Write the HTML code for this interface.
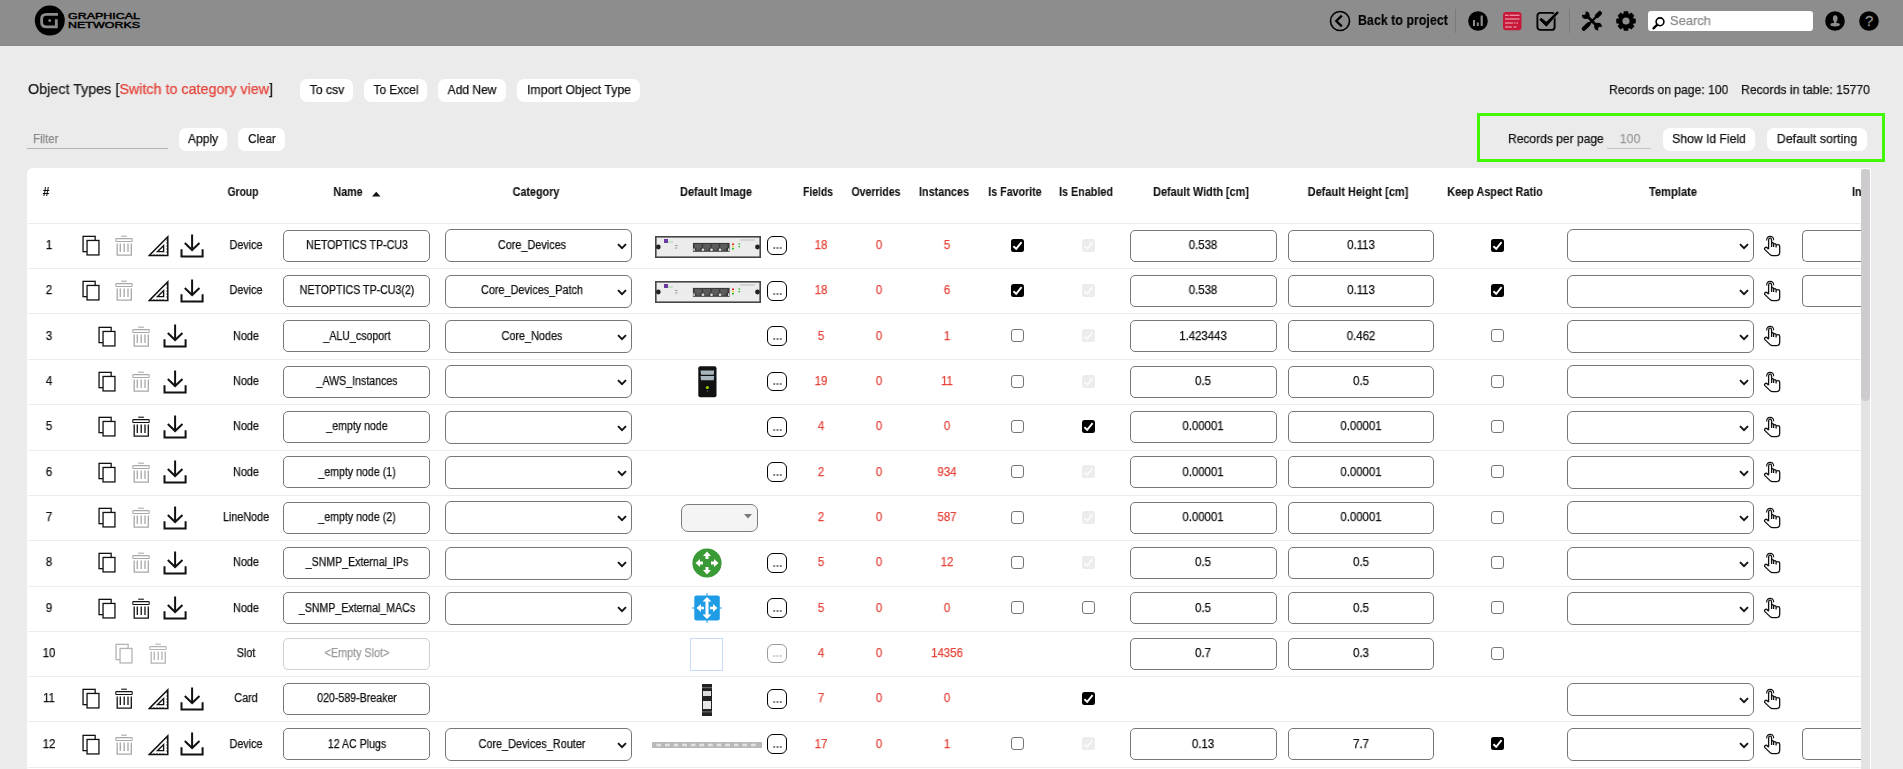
<!DOCTYPE html><html><head><meta charset="utf-8"><style>
html,body{margin:0;padding:0;width:1903px;height:769px;overflow:hidden;background:#ebebeb;font-family:'Liberation Sans',sans-serif;}
.a{position:absolute;box-sizing:border-box;}
.t{position:absolute;white-space:nowrap;font-family:'Liberation Sans',sans-serif;-webkit-text-stroke:0.25px currentColor;will-change:transform;}
</style></head><body>
<div class="a" style="left:0px;top:0px;width:1903px;height:46px;background:#8d8d8d;border-bottom:1px solid #888;"></div>
<svg class="a" style="left:34px;top:5px;" width="31" height="31" viewBox="0 0 31 31"><circle cx="15.8" cy="15.6" r="15" fill="#000"/>
<path d="M24 9.4 H12.5 Q7.6 9.4 7.6 14 V17.2 Q7.6 21.8 12.5 21.8 H22.3 V14.2" fill="none" stroke="#8d8d8d" stroke-width="2.8"/>
<circle cx="15.7" cy="15.6" r="1.4" fill="#8d8d8d"/></svg>
<svg class="a" style="left:68px;top:12px;" width="73" height="18" viewBox="0 0 73 18"><text x="0" y="7.3" font-family="Liberation Sans" font-size="8.8" textLength="72" lengthAdjust="spacingAndGlyphs" fill="#000" stroke="#000" stroke-width="0.45">GRAPHICAL</text>
<text x="0" y="16.3" font-family="Liberation Sans" font-size="8.8" textLength="72" lengthAdjust="spacingAndGlyphs" fill="#000" stroke="#000" stroke-width="0.45">NETWORKS</text></svg>
<svg class="a" style="left:1329px;top:10px;" width="22" height="22" viewBox="0 0 22 22"><circle cx="11" cy="11" r="9.5" fill="none" stroke="#000" stroke-width="1.6"/><path d="M12.8 5.6 L7.3 11 L12.8 16.4" fill="none" stroke="#000" stroke-width="2.3"/></svg>
<span class="t" style="left:1358px;top:13px;font-size:14px;line-height:14px;font-weight:700;color:#000;transform:scaleX(0.888);transform-origin:0 50%;-webkit-text-stroke:0.1px currentColor;">Back to project</span>
<div class="a" style="left:1455px;top:9px;width:1px;height:24px;background:#7a7a7a;"></div>
<svg class="a" style="left:1468px;top:11px;" width="20" height="20" viewBox="0 0 20 20"><circle cx="10" cy="10" r="9.8" fill="#000"/><rect x="5" y="9" width="2" height="6" fill="#8d8d8d"/><rect x="8.8" y="11.5" width="2" height="3.5" fill="#8d8d8d"/><rect x="12.6" y="4.5" width="2.2" height="10.5" fill="#8d8d8d"/></svg>
<svg class="a" style="left:1503px;top:12px;" width="19" height="19" viewBox="0 0 19 19"><rect x="0" y="0" width="18.5" height="18.3" rx="3" fill="#c8183a"/><g stroke="#f3b7c2" stroke-width="1.1"><path d="M2 3.2H5.5M6.5 3.2H16.5M2 7H16.5M2 11H10M11 11H12.5M13.5 11H15M2 15H9M10.5 15H13.5"/></g></svg>
<svg class="a" style="left:1536px;top:11px;" width="24" height="20" viewBox="0 0 24 20"><rect x="1.4" y="1.9" width="17.2" height="17" rx="3" fill="none" stroke="#000" stroke-width="1.9"/><path d="M3.5 8.8 L5.2 7 L10.3 11 L21.2 0.4 L22.6 1.8 L10.4 15.4 Z" fill="#000" stroke="#8d8d8d" stroke-width="1.4" paint-order="stroke"/><path d="M3.5 8.8 L5.2 7 L10.3 11 L21.2 0.4 L22.6 1.8 L10.4 15.4 Z" fill="#000"/></svg>
<div class="a" style="left:1569px;top:9px;width:1px;height:24px;background:#7a7a7a;"></div>
<svg class="a" style="left:1579px;top:8px;" width="27" height="26" viewBox="0 0 27 26"><path d="M5.5 20.5 L20 6" stroke="#000" stroke-width="2.2" stroke-linecap="round"/>
<path d="M4.8 20.8 L9.5 16.2" stroke="#000" stroke-width="4.2" stroke-linecap="round"/>
<path d="M18 8 L20.8 5.2" stroke="#000" stroke-width="4.4" stroke-linecap="round"/>
<path d="M7 7 L19 19" stroke="#000" stroke-width="2.8"/>
<circle cx="6.8" cy="7.2" r="3.8" fill="#000"/><circle cx="19" cy="18.6" r="3.8" fill="#000"/>
<circle cx="4.6" cy="4.8" r="2.2" fill="#8d8d8d"/><circle cx="21.2" cy="21" r="2.2" fill="#8d8d8d"/></svg>
<svg class="a" style="left:1616px;top:11px;" width="20" height="20" viewBox="0 0 20 20"><path d="M19.76 7.82 L19.76 12.18 L17.11 12.68 L16.92 13.14 L18.44 15.36 L15.36 18.44 L13.14 16.92 L12.68 17.11 L12.18 19.76 L7.82 19.76 L7.32 17.11 L6.86 16.92 L4.64 18.44 L1.56 15.36 L3.08 13.14 L2.89 12.68 L0.24 12.18 L0.24 7.82 L2.89 7.32 L3.08 6.86 L1.56 4.64 L4.64 1.56 L6.86 3.08 L7.32 2.89 L7.82 0.24 L12.18 0.24 L12.68 2.89 L13.14 3.08 L15.36 1.56 L18.44 4.64 L16.92 6.86 L17.11 7.32Z" fill="#000"/><circle cx="10" cy="10" r="3.6" fill="#8d8d8d"/></svg>
<div class="a" style="left:1648px;top:11px;width:165px;height:20px;background:#fff;border-radius:3px;"></div>
<svg class="a" style="left:1652px;top:16px;" width="14" height="14" viewBox="0 0 14 14"><circle cx="8" cy="5.8" r="3.9" fill="none" stroke="#000" stroke-width="1.6"/><path d="M5.3 8.6 L1.5 12.4" stroke="#000" stroke-width="2.2" stroke-linecap="round"/></svg>
<span class="t" style="left:1670px;top:14px;font-size:13px;line-height:13px;font-weight:400;color:#8a8a8a;transform:scaleX(0.9878048780487805);transform-origin:0 50%;">Search</span>
<svg class="a" style="left:1825px;top:11px;" width="20" height="20" viewBox="0 0 20 20"><circle cx="10" cy="10" r="9.8" fill="#000"/><ellipse cx="10.2" cy="7.5" rx="2.3" ry="3.2" fill="#8d8d8d"/><rect x="9" y="9.5" width="2.4" height="3" fill="#8d8d8d"/><ellipse cx="10.1" cy="13.6" rx="4.8" ry="1.9" fill="#8d8d8d"/></svg>
<svg class="a" style="left:1859px;top:11px;" width="20" height="20" viewBox="0 0 20 20"><circle cx="10" cy="10" r="9.8" fill="#000"/><text x="10.2" y="15.4" text-anchor="middle" font-family="Liberation Sans" font-size="15" fill="#8d8d8d" stroke="#8d8d8d" stroke-width="0.3">?</text></svg>
<span class="t" style="left:27.5px;top:82px;font-size:14.5px;line-height:14.5px;color:#1b1b1b;transform:scaleX(0.988);transform-origin:0 50%">Object Types [<span style="color:#e5443a">Switch to category view</span>]</span>
<div class="a" style="left:300px;top:79px;width:53px;height:22.5px;background:#fff;border-radius:7px;"></div>
<span class="t" style="left:326.5px;top:82.5px;font-size:13px;line-height:13px;font-weight:400;color:#111;transform:translateX(-50%) scaleX(0.9383378016085792);transform-origin:50% 50%;">To csv</span>
<div class="a" style="left:364px;top:79px;width:63px;height:22.5px;background:#fff;border-radius:7px;"></div>
<span class="t" style="left:395.5px;top:82.5px;font-size:13px;line-height:13px;font-weight:400;color:#111;transform:translateX(-50%) scaleX(0.9146341463414633);transform-origin:50% 50%;">To Excel</span>
<div class="a" style="left:438px;top:79px;width:68px;height:22.5px;background:#fff;border-radius:7px;"></div>
<span class="t" style="left:472.0px;top:82.5px;font-size:13px;line-height:13px;font-weight:400;color:#111;transform:translateX(-50%) scaleX(0.9250936329588015);transform-origin:50% 50%;">Add New</span>
<div class="a" style="left:517px;top:79px;width:123px;height:22.5px;background:#fff;border-radius:7px;"></div>
<span class="t" style="left:578.5px;top:82.5px;font-size:13px;line-height:13px;font-weight:400;color:#111;transform:translateX(-50%) scaleX(0.949367088607595);transform-origin:50% 50%;">Import Object Type</span>
<span class="t" style="left:1609px;top:83px;font-size:13px;line-height:13px;font-weight:400;color:#111;transform:scaleX(0.9324009324009325);transform-origin:0 50%;">Records on page: 100</span>
<span class="t" style="left:1741px;top:83px;font-size:13px;line-height:13px;font-weight:400;color:#111;transform:scaleX(0.9391745112237508);transform-origin:0 50%;">Records in table: 15770</span>
<span class="t" style="left:33px;top:132px;font-size:13px;line-height:13px;font-weight:400;color:#8a8a8a;transform:scaleX(0.8823529411764706);transform-origin:0 50%;">Filter</span>
<div class="a" style="left:27px;top:148px;width:141px;height:1px;background:#b4b4b4;"></div>
<div class="a" style="left:179px;top:128px;width:48px;height:22.5px;background:#fff;border-radius:7px;"></div>
<span class="t" style="left:203.0px;top:131.5px;font-size:13px;line-height:13px;font-weight:400;color:#111;transform:translateX(-50%) scaleX(0.9272727272727274);transform-origin:50% 50%;">Apply</span>
<div class="a" style="left:238px;top:128px;width:47px;height:22.5px;background:#fff;border-radius:7px;"></div>
<span class="t" style="left:261.5px;top:131.5px;font-size:13px;line-height:13px;font-weight:400;color:#111;transform:translateX(-50%) scaleX(0.889589905362776);transform-origin:50% 50%;">Clear</span>
<div class="a" style="left:1477px;top:112.5px;width:407.5px;height:49px;border:3px solid #41f702;"></div>
<span class="t" style="left:1507.5px;top:132px;font-size:13px;line-height:13px;font-weight:400;color:#111;transform:scaleX(0.926032660902978);transform-origin:0 50%;">Records per page</span>
<span class="t" style="left:1629.5px;top:132px;font-size:13px;line-height:13px;font-weight:400;color:#9a9a9a;transform:translateX(-50%) scaleX(0.95);transform-origin:50% 50%;">100</span>
<div class="a" style="left:1607px;top:148px;width:44px;height:1px;background:#c4c4c4;"></div>
<div class="a" style="left:1663px;top:128px;width:92px;height:22.5px;background:#fff;border-radius:7px;"></div>
<span class="t" style="left:1709.0px;top:131.5px;font-size:13px;line-height:13px;font-weight:400;color:#111;transform:translateX(-50%) scaleX(0.9350318471337581);transform-origin:50% 50%;">Show Id Field</span>
<div class="a" style="left:1767px;top:128px;width:100px;height:22.5px;background:#fff;border-radius:7px;"></div>
<span class="t" style="left:1817.0px;top:131.5px;font-size:13px;line-height:13px;font-weight:400;color:#111;transform:translateX(-50%) scaleX(0.9621749408983453);transform-origin:50% 50%;">Default sorting</span>
<div class="a" style="left:27px;top:168px;width:1844px;height:620px;background:#fff;border-radius:6px 0 0 0;"></div>
<span class="t" style="left:46px;top:186px;font-size:12px;line-height:12px;font-weight:700;color:#111;transform:translateX(-50%) scaleX(1.0);transform-origin:50% 50%;-webkit-text-stroke:0.1px currentColor;">#</span>
<span class="t" style="left:242.8px;top:186px;font-size:12px;line-height:12px;font-weight:700;color:#111;transform:translateX(-50%) scaleX(0.8553000560852496);transform-origin:50% 50%;-webkit-text-stroke:0.1px currentColor;">Group</span>
<span class="t" style="left:348.3px;top:186px;font-size:12px;line-height:12px;font-weight:700;color:#111;transform:translateX(-50%) scaleX(0.8939393939393939);transform-origin:50% 50%;-webkit-text-stroke:0.1px currentColor;">Name</span>
<span class="t" style="left:535.5px;top:186px;font-size:12px;line-height:12px;font-weight:700;color:#111;transform:translateX(-50%) scaleX(0.8986615678776291);transform-origin:50% 50%;-webkit-text-stroke:0.1px currentColor;">Category</span>
<span class="t" style="left:716.4px;top:186px;font-size:12px;line-height:12px;font-weight:700;color:#111;transform:translateX(-50%) scaleX(0.9151898734177215);transform-origin:50% 50%;-webkit-text-stroke:0.1px currentColor;">Default Image</span>
<span class="t" style="left:817.8px;top:186px;font-size:12px;line-height:12px;font-weight:700;color:#111;transform:translateX(-50%) scaleX(0.8628571428571429);transform-origin:50% 50%;-webkit-text-stroke:0.1px currentColor;">Fields</span>
<span class="t" style="left:875.7px;top:186px;font-size:12px;line-height:12px;font-weight:700;color:#111;transform:translateX(-50%) scaleX(0.874113475177305);transform-origin:50% 50%;-webkit-text-stroke:0.1px currentColor;">Overrides</span>
<span class="t" style="left:943.8px;top:186px;font-size:12px;line-height:12px;font-weight:700;color:#111;transform:translateX(-50%) scaleX(0.9048473967684021);transform-origin:50% 50%;-webkit-text-stroke:0.1px currentColor;">Instances</span>
<span class="t" style="left:1014.6px;top:186px;font-size:12px;line-height:12px;font-weight:700;color:#111;transform:translateX(-50%) scaleX(0.888888888888889);transform-origin:50% 50%;-webkit-text-stroke:0.1px currentColor;">Is Favorite</span>
<span class="t" style="left:1086.2px;top:186px;font-size:12px;line-height:12px;font-weight:700;color:#111;transform:translateX(-50%) scaleX(0.897822445561139);transform-origin:50% 50%;-webkit-text-stroke:0.1px currentColor;">Is Enabled</span>
<span class="t" style="left:1200.5px;top:186px;font-size:12px;line-height:12px;font-weight:700;color:#111;transform:translateX(-50%) scaleX(0.9036827195467422);transform-origin:50% 50%;-webkit-text-stroke:0.1px currentColor;">Default Width [cm]</span>
<span class="t" style="left:1358px;top:186px;font-size:12px;line-height:12px;font-weight:700;color:#111;transform:translateX(-50%) scaleX(0.9145454545454544);transform-origin:50% 50%;-webkit-text-stroke:0.1px currentColor;">Default Height [cm]</span>
<span class="t" style="left:1494.8px;top:186px;font-size:12px;line-height:12px;font-weight:700;color:#111;transform:translateX(-50%) scaleX(0.9044465468306527);transform-origin:50% 50%;-webkit-text-stroke:0.1px currentColor;">Keep Aspect Ratio</span>
<span class="t" style="left:1673px;top:186px;font-size:12px;line-height:12px;font-weight:700;color:#111;transform:translateX(-50%) scaleX(0.9309021113243762);transform-origin:50% 50%;-webkit-text-stroke:0.1px currentColor;">Template</span>
<span class="t" style="left:1851.5px;top:186px;font-size:12px;line-height:12px;font-weight:700;color:#111;transform:scaleX(0.9);transform-origin:0 50%;-webkit-text-stroke:0.1px currentColor;">In</span>
<svg class="a" style="left:372px;top:191px;" width="9" height="6" viewBox="0 0 9 6"><path d="M0 5.5 L4.25 0.8 L8.5 5.5 Z" fill="#111"/></svg>
<div class="a" style="left:28px;top:223px;width:1833px;height:1px;background:#ececec;"></div>
<div class="a" style="left:28px;top:268px;width:1833px;height:1px;background:#ececec;"></div>
<div class="a" style="left:28px;top:313px;width:1833px;height:1px;background:#ececec;"></div>
<div class="a" style="left:28px;top:359px;width:1833px;height:1px;background:#ececec;"></div>
<div class="a" style="left:28px;top:404px;width:1833px;height:1px;background:#ececec;"></div>
<div class="a" style="left:28px;top:450px;width:1833px;height:1px;background:#ececec;"></div>
<div class="a" style="left:28px;top:495px;width:1833px;height:1px;background:#ececec;"></div>
<div class="a" style="left:28px;top:540px;width:1833px;height:1px;background:#ececec;"></div>
<div class="a" style="left:28px;top:586px;width:1833px;height:1px;background:#ececec;"></div>
<div class="a" style="left:28px;top:631px;width:1833px;height:1px;background:#ececec;"></div>
<div class="a" style="left:28px;top:676px;width:1833px;height:1px;background:#ececec;"></div>
<div class="a" style="left:28px;top:721px;width:1833px;height:1px;background:#ececec;"></div>
<div class="a" style="left:28px;top:767px;width:1833px;height:1px;background:#ececec;"></div>
<span class="t" style="left:48.5px;top:239.0px;font-size:12px;line-height:12px;font-weight:400;color:#111;transform:translateX(-50%) scaleX(0.95);transform-origin:50% 50%;">1</span>
<svg class="a" style="left:82px;top:234.89999999999998px;" width="18" height="21" viewBox="0 0 18 21"><rect x="1.05" y="1.35" width="12.1" height="15.3" fill="none" stroke="#111" stroke-width="1.3"/><rect x="5.05" y="5.45" width="11.9" height="14.5" fill="#fff" stroke="#111" stroke-width="1.3"/></svg>
<svg class="a" style="left:115px;top:234.89999999999998px;" width="18" height="21" viewBox="0 0 18 21"><path d="M6.2 1.2 H11.9" stroke="#a8a8a8" stroke-width="1.1"/><rect x="0.8" y="3.6" width="16.4" height="2.9" rx="0.6" fill="none" stroke="#a8a8a8" stroke-width="1.05"/><path d="M2.2 8.5 V20.1 H16.3 V8.5 M5.3 8.5 V16.9 M9.2 8.5 V16.9 M13 8.5 V16.9" fill="none" stroke="#a8a8a8" stroke-width="1.3"/></svg>
<svg class="a" style="left:147.8px;top:234.89999999999998px;" width="21" height="22" viewBox="0 0 21 22"><path d="M1.2 20.6 L19.8 1.8 V20.6 Z" fill="none" stroke="#111" stroke-width="1.5" stroke-linejoin="miter"/><path d="M9.6 16.6 L15.6 10.6 V16.6 Z" fill="none" stroke="#111" stroke-width="1.4"/><path d="M18.2 5 H19.5 M18.2 8 H19.5 M18.2 11 H19.5 M18.2 14 H19.5 M18.2 17 H19.5 M6 19.2 V20.5 M9 19.2 V20.5 M12 19.2 V20.5 M15 19.2 V20.5" stroke="#111" stroke-width="0.9"/></svg>
<svg class="a" style="left:179.6px;top:233.59999999999997px;" width="25" height="24" viewBox="0 0 25 24"><path d="M12.1 0.5 V15.5 M4.8 9 L12.1 16 L19.5 9" fill="none" stroke="#111" stroke-width="2"/><path d="M1.5 15.3 V22.4 H22.6 V15.3" fill="none" stroke="#111" stroke-width="2"/></svg>
<span class="t" style="left:245.5px;top:239.0px;font-size:12px;line-height:12px;font-weight:400;color:#111;transform:translateX(-50%) scaleX(0.9);transform-origin:50% 50%;">Device</span>
<div class="a" style="left:283px;top:230px;width:147px;height:32px;background:#fff;border:1px solid #767676;border-radius:5px;"></div>
<span class="t" style="left:356.5px;top:239.0px;font-size:12px;line-height:12px;font-weight:400;color:#111;transform:translateX(-50%) scaleX(0.885);transform-origin:50% 50%;">NETOPTICS TP-CU3</span>
<div class="a" style="left:445px;top:229px;width:187px;height:33px;background:#fff;border:1px solid #767676;border-radius:6px;"></div>
<svg class="a" style="left:617px;top:243px;" width="10" height="7" viewBox="0 0 10 7"><path d="M1 1.2 L5 5.2 L9 1.2" fill="none" stroke="#111" stroke-width="1.9"/></svg>
<span class="t" style="left:532px;top:239.0px;font-size:12px;line-height:12px;font-weight:400;color:#111;transform:translateX(-50%) scaleX(0.905);transform-origin:50% 50%;">Core_Devices</span>
<svg class="a" style="left:655px;top:235.5px" width="106" height="22" viewBox="0 0 106 22">
<rect x="0.8" y="0.8" width="104.4" height="20.4" fill="#ececec" stroke="#454545" stroke-width="1.6"/>
<circle cx="3.3" cy="11" r="2.4" fill="#222"/><circle cx="102.5" cy="11" r="2.4" fill="#222"/>
<rect x="9" y="3" width="4" height="4" fill="#6a3aa0"/><rect x="13" y="5.5" width="5" height="1" fill="#9d9"/>
<rect x="37.9" y="6.9" width="36.7" height="8.9" fill="#3a3a3a"/><path d="M39.60 8 H46.80 V11.9 H45.10 V14.4 H41.30 V11.9 H39.60 Z" fill="#5c5c5c"/><rect x="38.3" y="12.4" width="1.6" height="2.6" fill="#d6d6d6"/><path d="M48.15 8 H55.35 V11.9 H53.65 V14.4 H49.85 V11.9 H48.15 Z" fill="#5c5c5c"/><rect x="46.55" y="12.4" width="2.8" height="2.6" rx="1" fill="#d6d6d6"/><path d="M56.70 8 H63.90 V11.9 H62.20 V14.4 H58.40 V11.9 H56.70 Z" fill="#5c5c5c"/><rect x="55.10" y="12.4" width="2.8" height="2.6" rx="1" fill="#d6d6d6"/><path d="M65.25 8 H72.45 V11.9 H70.75 V14.4 H66.95 V11.9 H65.25 Z" fill="#5c5c5c"/><rect x="63.65" y="12.4" width="2.8" height="2.6" rx="1" fill="#d6d6d6"/><rect x="73" y="12.4" width="1.4" height="2.6" fill="#d6d6d6"/>
<rect x="77" y="7.5" width="2" height="1.5" fill="#d22"/><rect x="77" y="9.8" width="2" height="1.5" fill="#dc3"/><rect x="77" y="12" width="2" height="1.5" fill="#3b3"/>
<rect x="83.5" y="7.3" width="1.6" height="1.3" fill="#3b3"/><rect x="83.5" y="10" width="1.6" height="1.3" fill="#3b3"/>
<rect x="20" y="9" width="2.5" height="1" fill="#999"/><rect x="20" y="11.5" width="2.5" height="1" fill="#999"/>
<rect x="85" y="3.5" width="15" height="1" fill="#bbb"/>
</svg>
<div class="a" style="left:767px;top:235.7px;width:20px;height:19.6px;background:#fff;border:1px solid #000;border-radius:6px;"></div>
<svg class="a" style="left:772.5px;top:247.2px;" width="9" height="2" viewBox="0 0 9 2"><path d="M0.3 1 H2.2 M3.5 1 H5.5 M6.8 1 H8.7" stroke="#000" stroke-width="1.2"/></svg>
<span class="t" style="left:820.8px;top:239.0px;font-size:12px;line-height:12px;font-weight:400;color:#e5443a;transform:translateX(-50%) scaleX(0.95);transform-origin:50% 50%;">18</span>
<span class="t" style="left:878.5px;top:239.0px;font-size:12px;line-height:12px;font-weight:400;color:#e5443a;transform:translateX(-50%) scaleX(0.95);transform-origin:50% 50%;">0</span>
<span class="t" style="left:946.8px;top:239.0px;font-size:12px;line-height:12px;font-weight:400;color:#e5443a;transform:translateX(-50%) scaleX(0.95);transform-origin:50% 50%;">5</span>
<svg class="a" style="left:1010.5px;top:238.7px;" width="13" height="13" viewBox="0 0 13 13"><rect x="0" y="0" width="13" height="13" rx="2.5" fill="#000"/><path d="M2.4 7.2 L5.2 9.8 L10.6 3.2" fill="none" stroke="#fff" stroke-width="1.9"/></svg>
<svg class="a" style="left:1082.0px;top:238.7px;" width="13" height="13" viewBox="0 0 13 13"><rect x="0" y="0" width="13" height="13" rx="2.5" fill="#ececec"/><path d="M2.4 7.2 L5.2 9.8 L10.6 3.2" fill="none" stroke="#fafafa" stroke-width="1.9"/></svg>
<div class="a" style="left:1130px;top:230px;width:147px;height:32px;background:#fff;border:1px solid #767676;border-radius:5px;"></div>
<span class="t" style="left:1203.3px;top:239.0px;font-size:12px;line-height:12px;font-weight:400;color:#111;transform:translateX(-50%) scaleX(0.95);transform-origin:50% 50%;">0.538</span>
<div class="a" style="left:1288px;top:230px;width:146px;height:32px;background:#fff;border:1px solid #767676;border-radius:5px;"></div>
<span class="t" style="left:1361px;top:239.0px;font-size:12px;line-height:12px;font-weight:400;color:#111;transform:translateX(-50%) scaleX(0.95);transform-origin:50% 50%;">0.113</span>
<svg class="a" style="left:1490.5px;top:238.7px;" width="13" height="13" viewBox="0 0 13 13"><rect x="0" y="0" width="13" height="13" rx="2.5" fill="#000"/><path d="M2.4 7.2 L5.2 9.8 L10.6 3.2" fill="none" stroke="#fff" stroke-width="1.9"/></svg>
<div class="a" style="left:1567px;top:229px;width:187px;height:33px;background:#fff;border:1px solid #767676;border-radius:6px;"></div>
<svg class="a" style="left:1739px;top:243px;" width="10" height="7" viewBox="0 0 10 7"><path d="M1 1.2 L5 5.2 L9 1.2" fill="none" stroke="#111" stroke-width="1.9"/></svg>
<svg class="a" style="left:1760px;top:231.7px;" width="22" height="26" viewBox="0 0 22 26"><path d="M6.6 8.6 Q6.7 4.5 10.2 4.4 Q13.6 4.5 13.7 8.2" fill="none" stroke="#111" stroke-width="1.1"/><path d="M8.6 17 V8 Q8.6 6.1 10.1 6.1 Q11.6 6.1 11.6 8 V15 M11.6 11.6 Q11.6 10.6 12.6 10.6 Q13.6 10.6 13.6 11.8 V15 M13.6 12.6 Q13.6 11.6 14.8 11.6 Q16.1 11.6 16.1 12.9 V15.5 M16.1 13.6 Q16.1 12.6 17.9 12.6 Q19.7 12.6 19.7 14.2 V20.5 Q19.7 23.6 16.5 23.6 H12.6 Q11.1 23.6 10.1 22.6 L4.9 17.6 Q4.1 16.6 5.1 15.6 Q6.1 14.9 7.1 15.6 L8.6 17.2" fill="#fff" stroke="#111" stroke-width="1.3" stroke-linejoin="round"/></svg>
<div class="a" style="left:1802px;top:230px;width:59px;height:32px;background:#fff;border:1px solid #767676;border-right:none;border-radius:5px 0 0 5px;"></div>
<span class="t" style="left:48.5px;top:284.3333px;font-size:12px;line-height:12px;font-weight:400;color:#111;transform:translateX(-50%) scaleX(0.95);transform-origin:50% 50%;">2</span>
<svg class="a" style="left:82px;top:280.2333px;" width="18" height="21" viewBox="0 0 18 21"><rect x="1.05" y="1.35" width="12.1" height="15.3" fill="none" stroke="#111" stroke-width="1.3"/><rect x="5.05" y="5.45" width="11.9" height="14.5" fill="#fff" stroke="#111" stroke-width="1.3"/></svg>
<svg class="a" style="left:115px;top:280.2333px;" width="18" height="21" viewBox="0 0 18 21"><path d="M6.2 1.2 H11.9" stroke="#a8a8a8" stroke-width="1.1"/><rect x="0.8" y="3.6" width="16.4" height="2.9" rx="0.6" fill="none" stroke="#a8a8a8" stroke-width="1.05"/><path d="M2.2 8.5 V20.1 H16.3 V8.5 M5.3 8.5 V16.9 M9.2 8.5 V16.9 M13 8.5 V16.9" fill="none" stroke="#a8a8a8" stroke-width="1.3"/></svg>
<svg class="a" style="left:147.8px;top:280.2333px;" width="21" height="22" viewBox="0 0 21 22"><path d="M1.2 20.6 L19.8 1.8 V20.6 Z" fill="none" stroke="#111" stroke-width="1.5" stroke-linejoin="miter"/><path d="M9.6 16.6 L15.6 10.6 V16.6 Z" fill="none" stroke="#111" stroke-width="1.4"/><path d="M18.2 5 H19.5 M18.2 8 H19.5 M18.2 11 H19.5 M18.2 14 H19.5 M18.2 17 H19.5 M6 19.2 V20.5 M9 19.2 V20.5 M12 19.2 V20.5 M15 19.2 V20.5" stroke="#111" stroke-width="0.9"/></svg>
<svg class="a" style="left:179.6px;top:278.9333px;" width="25" height="24" viewBox="0 0 25 24"><path d="M12.1 0.5 V15.5 M4.8 9 L12.1 16 L19.5 9" fill="none" stroke="#111" stroke-width="2"/><path d="M1.5 15.3 V22.4 H22.6 V15.3" fill="none" stroke="#111" stroke-width="2"/></svg>
<span class="t" style="left:245.5px;top:284.3333px;font-size:12px;line-height:12px;font-weight:400;color:#111;transform:translateX(-50%) scaleX(0.9);transform-origin:50% 50%;">Device</span>
<div class="a" style="left:283px;top:275px;width:147px;height:32px;background:#fff;border:1px solid #767676;border-radius:5px;"></div>
<span class="t" style="left:356.5px;top:284.3333px;font-size:12px;line-height:12px;font-weight:400;color:#111;transform:translateX(-50%) scaleX(0.885);transform-origin:50% 50%;">NETOPTICS TP-CU3(2)</span>
<div class="a" style="left:445px;top:275px;width:187px;height:33px;background:#fff;border:1px solid #767676;border-radius:6px;"></div>
<svg class="a" style="left:617px;top:289px;" width="10" height="7" viewBox="0 0 10 7"><path d="M1 1.2 L5 5.2 L9 1.2" fill="none" stroke="#111" stroke-width="1.9"/></svg>
<span class="t" style="left:532px;top:284.3333px;font-size:12px;line-height:12px;font-weight:400;color:#111;transform:translateX(-50%) scaleX(0.905);transform-origin:50% 50%;">Core_Devices_Patch</span>
<svg class="a" style="left:655px;top:280.8333px" width="106" height="22" viewBox="0 0 106 22">
<rect x="0.8" y="0.8" width="104.4" height="20.4" fill="#ececec" stroke="#454545" stroke-width="1.6"/>
<circle cx="3.3" cy="11" r="2.4" fill="#222"/><circle cx="102.5" cy="11" r="2.4" fill="#222"/>
<rect x="9" y="3" width="4" height="4" fill="#6a3aa0"/><rect x="13" y="5.5" width="5" height="1" fill="#9d9"/>
<rect x="37.9" y="6.9" width="36.7" height="8.9" fill="#3a3a3a"/><path d="M39.60 8 H46.80 V11.9 H45.10 V14.4 H41.30 V11.9 H39.60 Z" fill="#5c5c5c"/><rect x="38.3" y="12.4" width="1.6" height="2.6" fill="#d6d6d6"/><path d="M48.15 8 H55.35 V11.9 H53.65 V14.4 H49.85 V11.9 H48.15 Z" fill="#5c5c5c"/><rect x="46.55" y="12.4" width="2.8" height="2.6" rx="1" fill="#d6d6d6"/><path d="M56.70 8 H63.90 V11.9 H62.20 V14.4 H58.40 V11.9 H56.70 Z" fill="#5c5c5c"/><rect x="55.10" y="12.4" width="2.8" height="2.6" rx="1" fill="#d6d6d6"/><path d="M65.25 8 H72.45 V11.9 H70.75 V14.4 H66.95 V11.9 H65.25 Z" fill="#5c5c5c"/><rect x="63.65" y="12.4" width="2.8" height="2.6" rx="1" fill="#d6d6d6"/><rect x="73" y="12.4" width="1.4" height="2.6" fill="#d6d6d6"/>
<rect x="77" y="7.5" width="2" height="1.5" fill="#d22"/><rect x="77" y="9.8" width="2" height="1.5" fill="#dc3"/><rect x="77" y="12" width="2" height="1.5" fill="#3b3"/>
<rect x="83.5" y="7.3" width="1.6" height="1.3" fill="#3b3"/><rect x="83.5" y="10" width="1.6" height="1.3" fill="#3b3"/>
<rect x="20" y="9" width="2.5" height="1" fill="#999"/><rect x="20" y="11.5" width="2.5" height="1" fill="#999"/>
<rect x="85" y="3.5" width="15" height="1" fill="#bbb"/>
</svg>
<div class="a" style="left:767px;top:281.0333px;width:20px;height:19.6px;background:#fff;border:1px solid #000;border-radius:6px;"></div>
<svg class="a" style="left:772.5px;top:292.5333px;" width="9" height="2" viewBox="0 0 9 2"><path d="M0.3 1 H2.2 M3.5 1 H5.5 M6.8 1 H8.7" stroke="#000" stroke-width="1.2"/></svg>
<span class="t" style="left:820.8px;top:284.3333px;font-size:12px;line-height:12px;font-weight:400;color:#e5443a;transform:translateX(-50%) scaleX(0.95);transform-origin:50% 50%;">18</span>
<span class="t" style="left:878.5px;top:284.3333px;font-size:12px;line-height:12px;font-weight:400;color:#e5443a;transform:translateX(-50%) scaleX(0.95);transform-origin:50% 50%;">0</span>
<span class="t" style="left:946.8px;top:284.3333px;font-size:12px;line-height:12px;font-weight:400;color:#e5443a;transform:translateX(-50%) scaleX(0.95);transform-origin:50% 50%;">6</span>
<svg class="a" style="left:1010.5px;top:284.0333px;" width="13" height="13" viewBox="0 0 13 13"><rect x="0" y="0" width="13" height="13" rx="2.5" fill="#000"/><path d="M2.4 7.2 L5.2 9.8 L10.6 3.2" fill="none" stroke="#fff" stroke-width="1.9"/></svg>
<svg class="a" style="left:1082.0px;top:284.0333px;" width="13" height="13" viewBox="0 0 13 13"><rect x="0" y="0" width="13" height="13" rx="2.5" fill="#ececec"/><path d="M2.4 7.2 L5.2 9.8 L10.6 3.2" fill="none" stroke="#fafafa" stroke-width="1.9"/></svg>
<div class="a" style="left:1130px;top:275px;width:147px;height:32px;background:#fff;border:1px solid #767676;border-radius:5px;"></div>
<span class="t" style="left:1203.3px;top:284.3333px;font-size:12px;line-height:12px;font-weight:400;color:#111;transform:translateX(-50%) scaleX(0.95);transform-origin:50% 50%;">0.538</span>
<div class="a" style="left:1288px;top:275px;width:146px;height:32px;background:#fff;border:1px solid #767676;border-radius:5px;"></div>
<span class="t" style="left:1361px;top:284.3333px;font-size:12px;line-height:12px;font-weight:400;color:#111;transform:translateX(-50%) scaleX(0.95);transform-origin:50% 50%;">0.113</span>
<svg class="a" style="left:1490.5px;top:284.0333px;" width="13" height="13" viewBox="0 0 13 13"><rect x="0" y="0" width="13" height="13" rx="2.5" fill="#000"/><path d="M2.4 7.2 L5.2 9.8 L10.6 3.2" fill="none" stroke="#fff" stroke-width="1.9"/></svg>
<div class="a" style="left:1567px;top:275px;width:187px;height:33px;background:#fff;border:1px solid #767676;border-radius:6px;"></div>
<svg class="a" style="left:1739px;top:289px;" width="10" height="7" viewBox="0 0 10 7"><path d="M1 1.2 L5 5.2 L9 1.2" fill="none" stroke="#111" stroke-width="1.9"/></svg>
<svg class="a" style="left:1760px;top:277.0333px;" width="22" height="26" viewBox="0 0 22 26"><path d="M6.6 8.6 Q6.7 4.5 10.2 4.4 Q13.6 4.5 13.7 8.2" fill="none" stroke="#111" stroke-width="1.1"/><path d="M8.6 17 V8 Q8.6 6.1 10.1 6.1 Q11.6 6.1 11.6 8 V15 M11.6 11.6 Q11.6 10.6 12.6 10.6 Q13.6 10.6 13.6 11.8 V15 M13.6 12.6 Q13.6 11.6 14.8 11.6 Q16.1 11.6 16.1 12.9 V15.5 M16.1 13.6 Q16.1 12.6 17.9 12.6 Q19.7 12.6 19.7 14.2 V20.5 Q19.7 23.6 16.5 23.6 H12.6 Q11.1 23.6 10.1 22.6 L4.9 17.6 Q4.1 16.6 5.1 15.6 Q6.1 14.9 7.1 15.6 L8.6 17.2" fill="#fff" stroke="#111" stroke-width="1.3" stroke-linejoin="round"/></svg>
<div class="a" style="left:1802px;top:275px;width:59px;height:32px;background:#fff;border:1px solid #767676;border-right:none;border-radius:5px 0 0 5px;"></div>
<span class="t" style="left:48.5px;top:329.6666px;font-size:12px;line-height:12px;font-weight:400;color:#111;transform:translateX(-50%) scaleX(0.95);transform-origin:50% 50%;">3</span>
<svg class="a" style="left:98px;top:325.5666px;" width="18" height="21" viewBox="0 0 18 21"><rect x="1.05" y="1.35" width="12.1" height="15.3" fill="none" stroke="#111" stroke-width="1.3"/><rect x="5.05" y="5.45" width="11.9" height="14.5" fill="#fff" stroke="#111" stroke-width="1.3"/></svg>
<svg class="a" style="left:132px;top:325.5666px;" width="18" height="21" viewBox="0 0 18 21"><path d="M6.2 1.2 H11.9" stroke="#a8a8a8" stroke-width="1.1"/><rect x="0.8" y="3.6" width="16.4" height="2.9" rx="0.6" fill="none" stroke="#a8a8a8" stroke-width="1.05"/><path d="M2.2 8.5 V20.1 H16.3 V8.5 M5.3 8.5 V16.9 M9.2 8.5 V16.9 M13 8.5 V16.9" fill="none" stroke="#a8a8a8" stroke-width="1.3"/></svg>
<svg class="a" style="left:162.5px;top:324.2666px;" width="25" height="24" viewBox="0 0 25 24"><path d="M12.1 0.5 V15.5 M4.8 9 L12.1 16 L19.5 9" fill="none" stroke="#111" stroke-width="2"/><path d="M1.5 15.3 V22.4 H22.6 V15.3" fill="none" stroke="#111" stroke-width="2"/></svg>
<span class="t" style="left:245.5px;top:329.6666px;font-size:12px;line-height:12px;font-weight:400;color:#111;transform:translateX(-50%) scaleX(0.9);transform-origin:50% 50%;">Node</span>
<div class="a" style="left:283px;top:320px;width:147px;height:32px;background:#fff;border:1px solid #767676;border-radius:5px;"></div>
<span class="t" style="left:356.5px;top:329.6666px;font-size:12px;line-height:12px;font-weight:400;color:#111;transform:translateX(-50%) scaleX(0.885);transform-origin:50% 50%;">_ALU_csoport</span>
<div class="a" style="left:445px;top:320px;width:187px;height:33px;background:#fff;border:1px solid #767676;border-radius:6px;"></div>
<svg class="a" style="left:617px;top:334px;" width="10" height="7" viewBox="0 0 10 7"><path d="M1 1.2 L5 5.2 L9 1.2" fill="none" stroke="#111" stroke-width="1.9"/></svg>
<span class="t" style="left:532px;top:329.6666px;font-size:12px;line-height:12px;font-weight:400;color:#111;transform:translateX(-50%) scaleX(0.905);transform-origin:50% 50%;">Core_Nodes</span>
<div class="a" style="left:767px;top:326.3666px;width:20px;height:19.6px;background:#fff;border:1px solid #000;border-radius:6px;"></div>
<svg class="a" style="left:772.5px;top:337.8666px;" width="9" height="2" viewBox="0 0 9 2"><path d="M0.3 1 H2.2 M3.5 1 H5.5 M6.8 1 H8.7" stroke="#000" stroke-width="1.2"/></svg>
<span class="t" style="left:820.8px;top:329.6666px;font-size:12px;line-height:12px;font-weight:400;color:#e5443a;transform:translateX(-50%) scaleX(0.95);transform-origin:50% 50%;">5</span>
<span class="t" style="left:878.5px;top:329.6666px;font-size:12px;line-height:12px;font-weight:400;color:#e5443a;transform:translateX(-50%) scaleX(0.95);transform-origin:50% 50%;">0</span>
<span class="t" style="left:946.8px;top:329.6666px;font-size:12px;line-height:12px;font-weight:400;color:#e5443a;transform:translateX(-50%) scaleX(0.95);transform-origin:50% 50%;">1</span>
<svg class="a" style="left:1010.5px;top:329.3666px;" width="13" height="13" viewBox="0 0 13 13"><rect x="0.5" y="0.5" width="12" height="12" rx="2.5" fill="#fff" stroke="#767676" stroke-width="1"/></svg>
<svg class="a" style="left:1082.0px;top:329.3666px;" width="13" height="13" viewBox="0 0 13 13"><rect x="0" y="0" width="13" height="13" rx="2.5" fill="#ececec"/><path d="M2.4 7.2 L5.2 9.8 L10.6 3.2" fill="none" stroke="#fafafa" stroke-width="1.9"/></svg>
<div class="a" style="left:1130px;top:320px;width:147px;height:32px;background:#fff;border:1px solid #767676;border-radius:5px;"></div>
<span class="t" style="left:1203.3px;top:329.6666px;font-size:12px;line-height:12px;font-weight:400;color:#111;transform:translateX(-50%) scaleX(0.95);transform-origin:50% 50%;">1.423443</span>
<div class="a" style="left:1288px;top:320px;width:146px;height:32px;background:#fff;border:1px solid #767676;border-radius:5px;"></div>
<span class="t" style="left:1361px;top:329.6666px;font-size:12px;line-height:12px;font-weight:400;color:#111;transform:translateX(-50%) scaleX(0.95);transform-origin:50% 50%;">0.462</span>
<svg class="a" style="left:1490.5px;top:329.3666px;" width="13" height="13" viewBox="0 0 13 13"><rect x="0.5" y="0.5" width="12" height="12" rx="2.5" fill="#fff" stroke="#767676" stroke-width="1"/></svg>
<div class="a" style="left:1567px;top:320px;width:187px;height:33px;background:#fff;border:1px solid #767676;border-radius:6px;"></div>
<svg class="a" style="left:1739px;top:334px;" width="10" height="7" viewBox="0 0 10 7"><path d="M1 1.2 L5 5.2 L9 1.2" fill="none" stroke="#111" stroke-width="1.9"/></svg>
<svg class="a" style="left:1760px;top:322.3666px;" width="22" height="26" viewBox="0 0 22 26"><path d="M6.6 8.6 Q6.7 4.5 10.2 4.4 Q13.6 4.5 13.7 8.2" fill="none" stroke="#111" stroke-width="1.1"/><path d="M8.6 17 V8 Q8.6 6.1 10.1 6.1 Q11.6 6.1 11.6 8 V15 M11.6 11.6 Q11.6 10.6 12.6 10.6 Q13.6 10.6 13.6 11.8 V15 M13.6 12.6 Q13.6 11.6 14.8 11.6 Q16.1 11.6 16.1 12.9 V15.5 M16.1 13.6 Q16.1 12.6 17.9 12.6 Q19.7 12.6 19.7 14.2 V20.5 Q19.7 23.6 16.5 23.6 H12.6 Q11.1 23.6 10.1 22.6 L4.9 17.6 Q4.1 16.6 5.1 15.6 Q6.1 14.9 7.1 15.6 L8.6 17.2" fill="#fff" stroke="#111" stroke-width="1.3" stroke-linejoin="round"/></svg>
<span class="t" style="left:48.5px;top:374.9999px;font-size:12px;line-height:12px;font-weight:400;color:#111;transform:translateX(-50%) scaleX(0.95);transform-origin:50% 50%;">4</span>
<svg class="a" style="left:98px;top:370.8999px;" width="18" height="21" viewBox="0 0 18 21"><rect x="1.05" y="1.35" width="12.1" height="15.3" fill="none" stroke="#111" stroke-width="1.3"/><rect x="5.05" y="5.45" width="11.9" height="14.5" fill="#fff" stroke="#111" stroke-width="1.3"/></svg>
<svg class="a" style="left:132px;top:370.8999px;" width="18" height="21" viewBox="0 0 18 21"><path d="M6.2 1.2 H11.9" stroke="#a8a8a8" stroke-width="1.1"/><rect x="0.8" y="3.6" width="16.4" height="2.9" rx="0.6" fill="none" stroke="#a8a8a8" stroke-width="1.05"/><path d="M2.2 8.5 V20.1 H16.3 V8.5 M5.3 8.5 V16.9 M9.2 8.5 V16.9 M13 8.5 V16.9" fill="none" stroke="#a8a8a8" stroke-width="1.3"/></svg>
<svg class="a" style="left:162.5px;top:369.5999px;" width="25" height="24" viewBox="0 0 25 24"><path d="M12.1 0.5 V15.5 M4.8 9 L12.1 16 L19.5 9" fill="none" stroke="#111" stroke-width="2"/><path d="M1.5 15.3 V22.4 H22.6 V15.3" fill="none" stroke="#111" stroke-width="2"/></svg>
<span class="t" style="left:245.5px;top:374.9999px;font-size:12px;line-height:12px;font-weight:400;color:#111;transform:translateX(-50%) scaleX(0.9);transform-origin:50% 50%;">Node</span>
<div class="a" style="left:283px;top:366px;width:147px;height:32px;background:#fff;border:1px solid #767676;border-radius:5px;"></div>
<span class="t" style="left:356.5px;top:374.9999px;font-size:12px;line-height:12px;font-weight:400;color:#111;transform:translateX(-50%) scaleX(0.885);transform-origin:50% 50%;">_AWS_Instances</span>
<div class="a" style="left:445px;top:365px;width:187px;height:33px;background:#fff;border:1px solid #767676;border-radius:6px;"></div>
<svg class="a" style="left:617px;top:379px;" width="10" height="7" viewBox="0 0 10 7"><path d="M1 1.2 L5 5.2 L9 1.2" fill="none" stroke="#111" stroke-width="1.9"/></svg>
<svg class="a" style="left:698px;top:366.1999px" width="19" height="32" viewBox="0 0 19 32">
<rect x="0.3" y="0.3" width="18.2" height="31" rx="2" fill="#111"/>
<path d="M2.5 4.5 H16.2 L15.7 8.8 H3 Z" fill="#a9b6bd"/><path d="M2.5 10 H16.2 L15.7 14.3 H3 Z" fill="#a9b6bd"/>
<circle cx="9.4" cy="21.5" r="1.6" fill="#8fd400"/><rect x="8.8" y="24.2" width="1.3" height="1.5" fill="#556"/>
</svg>
<div class="a" style="left:767px;top:371.6999px;width:20px;height:19.6px;background:#fff;border:1px solid #000;border-radius:6px;"></div>
<svg class="a" style="left:772.5px;top:383.1999px;" width="9" height="2" viewBox="0 0 9 2"><path d="M0.3 1 H2.2 M3.5 1 H5.5 M6.8 1 H8.7" stroke="#000" stroke-width="1.2"/></svg>
<span class="t" style="left:820.8px;top:374.9999px;font-size:12px;line-height:12px;font-weight:400;color:#e5443a;transform:translateX(-50%) scaleX(0.95);transform-origin:50% 50%;">19</span>
<span class="t" style="left:878.5px;top:374.9999px;font-size:12px;line-height:12px;font-weight:400;color:#e5443a;transform:translateX(-50%) scaleX(0.95);transform-origin:50% 50%;">0</span>
<span class="t" style="left:946.8px;top:374.9999px;font-size:12px;line-height:12px;font-weight:400;color:#e5443a;transform:translateX(-50%) scaleX(0.95);transform-origin:50% 50%;">11</span>
<svg class="a" style="left:1010.5px;top:374.6999px;" width="13" height="13" viewBox="0 0 13 13"><rect x="0.5" y="0.5" width="12" height="12" rx="2.5" fill="#fff" stroke="#767676" stroke-width="1"/></svg>
<svg class="a" style="left:1082.0px;top:374.6999px;" width="13" height="13" viewBox="0 0 13 13"><rect x="0" y="0" width="13" height="13" rx="2.5" fill="#ececec"/><path d="M2.4 7.2 L5.2 9.8 L10.6 3.2" fill="none" stroke="#fafafa" stroke-width="1.9"/></svg>
<div class="a" style="left:1130px;top:366px;width:147px;height:32px;background:#fff;border:1px solid #767676;border-radius:5px;"></div>
<span class="t" style="left:1203.3px;top:374.9999px;font-size:12px;line-height:12px;font-weight:400;color:#111;transform:translateX(-50%) scaleX(0.95);transform-origin:50% 50%;">0.5</span>
<div class="a" style="left:1288px;top:366px;width:146px;height:32px;background:#fff;border:1px solid #767676;border-radius:5px;"></div>
<span class="t" style="left:1361px;top:374.9999px;font-size:12px;line-height:12px;font-weight:400;color:#111;transform:translateX(-50%) scaleX(0.95);transform-origin:50% 50%;">0.5</span>
<svg class="a" style="left:1490.5px;top:374.6999px;" width="13" height="13" viewBox="0 0 13 13"><rect x="0.5" y="0.5" width="12" height="12" rx="2.5" fill="#fff" stroke="#767676" stroke-width="1"/></svg>
<div class="a" style="left:1567px;top:365px;width:187px;height:33px;background:#fff;border:1px solid #767676;border-radius:6px;"></div>
<svg class="a" style="left:1739px;top:379px;" width="10" height="7" viewBox="0 0 10 7"><path d="M1 1.2 L5 5.2 L9 1.2" fill="none" stroke="#111" stroke-width="1.9"/></svg>
<svg class="a" style="left:1760px;top:367.6999px;" width="22" height="26" viewBox="0 0 22 26"><path d="M6.6 8.6 Q6.7 4.5 10.2 4.4 Q13.6 4.5 13.7 8.2" fill="none" stroke="#111" stroke-width="1.1"/><path d="M8.6 17 V8 Q8.6 6.1 10.1 6.1 Q11.6 6.1 11.6 8 V15 M11.6 11.6 Q11.6 10.6 12.6 10.6 Q13.6 10.6 13.6 11.8 V15 M13.6 12.6 Q13.6 11.6 14.8 11.6 Q16.1 11.6 16.1 12.9 V15.5 M16.1 13.6 Q16.1 12.6 17.9 12.6 Q19.7 12.6 19.7 14.2 V20.5 Q19.7 23.6 16.5 23.6 H12.6 Q11.1 23.6 10.1 22.6 L4.9 17.6 Q4.1 16.6 5.1 15.6 Q6.1 14.9 7.1 15.6 L8.6 17.2" fill="#fff" stroke="#111" stroke-width="1.3" stroke-linejoin="round"/></svg>
<span class="t" style="left:48.5px;top:420.33320000000003px;font-size:12px;line-height:12px;font-weight:400;color:#111;transform:translateX(-50%) scaleX(0.95);transform-origin:50% 50%;">5</span>
<svg class="a" style="left:98px;top:416.2332px;" width="18" height="21" viewBox="0 0 18 21"><rect x="1.05" y="1.35" width="12.1" height="15.3" fill="none" stroke="#111" stroke-width="1.3"/><rect x="5.05" y="5.45" width="11.9" height="14.5" fill="#fff" stroke="#111" stroke-width="1.3"/></svg>
<svg class="a" style="left:132px;top:416.2332px;" width="18" height="21" viewBox="0 0 18 21"><path d="M6.2 1.2 H11.9" stroke="#111" stroke-width="1.1"/><rect x="0.8" y="3.6" width="16.4" height="2.9" rx="0.6" fill="none" stroke="#111" stroke-width="1.05"/><path d="M2.2 8.5 V20.1 H16.3 V8.5 M5.3 8.5 V16.9 M9.2 8.5 V16.9 M13 8.5 V16.9" fill="none" stroke="#111" stroke-width="1.3"/></svg>
<svg class="a" style="left:162.5px;top:414.9332px;" width="25" height="24" viewBox="0 0 25 24"><path d="M12.1 0.5 V15.5 M4.8 9 L12.1 16 L19.5 9" fill="none" stroke="#111" stroke-width="2"/><path d="M1.5 15.3 V22.4 H22.6 V15.3" fill="none" stroke="#111" stroke-width="2"/></svg>
<span class="t" style="left:245.5px;top:420.33320000000003px;font-size:12px;line-height:12px;font-weight:400;color:#111;transform:translateX(-50%) scaleX(0.9);transform-origin:50% 50%;">Node</span>
<div class="a" style="left:283px;top:411px;width:147px;height:32px;background:#fff;border:1px solid #767676;border-radius:5px;"></div>
<span class="t" style="left:356.5px;top:420.33320000000003px;font-size:12px;line-height:12px;font-weight:400;color:#111;transform:translateX(-50%) scaleX(0.885);transform-origin:50% 50%;">_empty node</span>
<div class="a" style="left:445px;top:411px;width:187px;height:33px;background:#fff;border:1px solid #767676;border-radius:6px;"></div>
<svg class="a" style="left:617px;top:425px;" width="10" height="7" viewBox="0 0 10 7"><path d="M1 1.2 L5 5.2 L9 1.2" fill="none" stroke="#111" stroke-width="1.9"/></svg>
<div class="a" style="left:767px;top:417.0332px;width:20px;height:19.6px;background:#fff;border:1px solid #000;border-radius:6px;"></div>
<svg class="a" style="left:772.5px;top:428.5332px;" width="9" height="2" viewBox="0 0 9 2"><path d="M0.3 1 H2.2 M3.5 1 H5.5 M6.8 1 H8.7" stroke="#000" stroke-width="1.2"/></svg>
<span class="t" style="left:820.8px;top:420.33320000000003px;font-size:12px;line-height:12px;font-weight:400;color:#e5443a;transform:translateX(-50%) scaleX(0.95);transform-origin:50% 50%;">4</span>
<span class="t" style="left:878.5px;top:420.33320000000003px;font-size:12px;line-height:12px;font-weight:400;color:#e5443a;transform:translateX(-50%) scaleX(0.95);transform-origin:50% 50%;">0</span>
<span class="t" style="left:946.8px;top:420.33320000000003px;font-size:12px;line-height:12px;font-weight:400;color:#e5443a;transform:translateX(-50%) scaleX(0.95);transform-origin:50% 50%;">0</span>
<svg class="a" style="left:1010.5px;top:420.0332px;" width="13" height="13" viewBox="0 0 13 13"><rect x="0.5" y="0.5" width="12" height="12" rx="2.5" fill="#fff" stroke="#767676" stroke-width="1"/></svg>
<svg class="a" style="left:1082.0px;top:420.0332px;" width="13" height="13" viewBox="0 0 13 13"><rect x="0" y="0" width="13" height="13" rx="2.5" fill="#000"/><path d="M2.4 7.2 L5.2 9.8 L10.6 3.2" fill="none" stroke="#fff" stroke-width="1.9"/></svg>
<div class="a" style="left:1130px;top:411px;width:147px;height:32px;background:#fff;border:1px solid #767676;border-radius:5px;"></div>
<span class="t" style="left:1203.3px;top:420.33320000000003px;font-size:12px;line-height:12px;font-weight:400;color:#111;transform:translateX(-50%) scaleX(0.95);transform-origin:50% 50%;">0.00001</span>
<div class="a" style="left:1288px;top:411px;width:146px;height:32px;background:#fff;border:1px solid #767676;border-radius:5px;"></div>
<span class="t" style="left:1361px;top:420.33320000000003px;font-size:12px;line-height:12px;font-weight:400;color:#111;transform:translateX(-50%) scaleX(0.95);transform-origin:50% 50%;">0.00001</span>
<svg class="a" style="left:1490.5px;top:420.0332px;" width="13" height="13" viewBox="0 0 13 13"><rect x="0.5" y="0.5" width="12" height="12" rx="2.5" fill="#fff" stroke="#767676" stroke-width="1"/></svg>
<div class="a" style="left:1567px;top:411px;width:187px;height:33px;background:#fff;border:1px solid #767676;border-radius:6px;"></div>
<svg class="a" style="left:1739px;top:425px;" width="10" height="7" viewBox="0 0 10 7"><path d="M1 1.2 L5 5.2 L9 1.2" fill="none" stroke="#111" stroke-width="1.9"/></svg>
<svg class="a" style="left:1760px;top:413.0332px;" width="22" height="26" viewBox="0 0 22 26"><path d="M6.6 8.6 Q6.7 4.5 10.2 4.4 Q13.6 4.5 13.7 8.2" fill="none" stroke="#111" stroke-width="1.1"/><path d="M8.6 17 V8 Q8.6 6.1 10.1 6.1 Q11.6 6.1 11.6 8 V15 M11.6 11.6 Q11.6 10.6 12.6 10.6 Q13.6 10.6 13.6 11.8 V15 M13.6 12.6 Q13.6 11.6 14.8 11.6 Q16.1 11.6 16.1 12.9 V15.5 M16.1 13.6 Q16.1 12.6 17.9 12.6 Q19.7 12.6 19.7 14.2 V20.5 Q19.7 23.6 16.5 23.6 H12.6 Q11.1 23.6 10.1 22.6 L4.9 17.6 Q4.1 16.6 5.1 15.6 Q6.1 14.9 7.1 15.6 L8.6 17.2" fill="#fff" stroke="#111" stroke-width="1.3" stroke-linejoin="round"/></svg>
<span class="t" style="left:48.5px;top:465.66650000000004px;font-size:12px;line-height:12px;font-weight:400;color:#111;transform:translateX(-50%) scaleX(0.95);transform-origin:50% 50%;">6</span>
<svg class="a" style="left:98px;top:461.5665px;" width="18" height="21" viewBox="0 0 18 21"><rect x="1.05" y="1.35" width="12.1" height="15.3" fill="none" stroke="#111" stroke-width="1.3"/><rect x="5.05" y="5.45" width="11.9" height="14.5" fill="#fff" stroke="#111" stroke-width="1.3"/></svg>
<svg class="a" style="left:132px;top:461.5665px;" width="18" height="21" viewBox="0 0 18 21"><path d="M6.2 1.2 H11.9" stroke="#a8a8a8" stroke-width="1.1"/><rect x="0.8" y="3.6" width="16.4" height="2.9" rx="0.6" fill="none" stroke="#a8a8a8" stroke-width="1.05"/><path d="M2.2 8.5 V20.1 H16.3 V8.5 M5.3 8.5 V16.9 M9.2 8.5 V16.9 M13 8.5 V16.9" fill="none" stroke="#a8a8a8" stroke-width="1.3"/></svg>
<svg class="a" style="left:162.5px;top:460.2665px;" width="25" height="24" viewBox="0 0 25 24"><path d="M12.1 0.5 V15.5 M4.8 9 L12.1 16 L19.5 9" fill="none" stroke="#111" stroke-width="2"/><path d="M1.5 15.3 V22.4 H22.6 V15.3" fill="none" stroke="#111" stroke-width="2"/></svg>
<span class="t" style="left:245.5px;top:465.66650000000004px;font-size:12px;line-height:12px;font-weight:400;color:#111;transform:translateX(-50%) scaleX(0.9);transform-origin:50% 50%;">Node</span>
<div class="a" style="left:283px;top:456px;width:147px;height:32px;background:#fff;border:1px solid #767676;border-radius:5px;"></div>
<span class="t" style="left:356.5px;top:465.66650000000004px;font-size:12px;line-height:12px;font-weight:400;color:#111;transform:translateX(-50%) scaleX(0.885);transform-origin:50% 50%;">_empty node (1)</span>
<div class="a" style="left:445px;top:456px;width:187px;height:33px;background:#fff;border:1px solid #767676;border-radius:6px;"></div>
<svg class="a" style="left:617px;top:470px;" width="10" height="7" viewBox="0 0 10 7"><path d="M1 1.2 L5 5.2 L9 1.2" fill="none" stroke="#111" stroke-width="1.9"/></svg>
<div class="a" style="left:767px;top:462.36650000000003px;width:20px;height:19.6px;background:#fff;border:1px solid #000;border-radius:6px;"></div>
<svg class="a" style="left:772.5px;top:473.86650000000003px;" width="9" height="2" viewBox="0 0 9 2"><path d="M0.3 1 H2.2 M3.5 1 H5.5 M6.8 1 H8.7" stroke="#000" stroke-width="1.2"/></svg>
<span class="t" style="left:820.8px;top:465.66650000000004px;font-size:12px;line-height:12px;font-weight:400;color:#e5443a;transform:translateX(-50%) scaleX(0.95);transform-origin:50% 50%;">2</span>
<span class="t" style="left:878.5px;top:465.66650000000004px;font-size:12px;line-height:12px;font-weight:400;color:#e5443a;transform:translateX(-50%) scaleX(0.95);transform-origin:50% 50%;">0</span>
<span class="t" style="left:946.8px;top:465.66650000000004px;font-size:12px;line-height:12px;font-weight:400;color:#e5443a;transform:translateX(-50%) scaleX(0.95);transform-origin:50% 50%;">934</span>
<svg class="a" style="left:1010.5px;top:465.36650000000003px;" width="13" height="13" viewBox="0 0 13 13"><rect x="0.5" y="0.5" width="12" height="12" rx="2.5" fill="#fff" stroke="#767676" stroke-width="1"/></svg>
<svg class="a" style="left:1082.0px;top:465.36650000000003px;" width="13" height="13" viewBox="0 0 13 13"><rect x="0" y="0" width="13" height="13" rx="2.5" fill="#ececec"/><path d="M2.4 7.2 L5.2 9.8 L10.6 3.2" fill="none" stroke="#fafafa" stroke-width="1.9"/></svg>
<div class="a" style="left:1130px;top:456px;width:147px;height:32px;background:#fff;border:1px solid #767676;border-radius:5px;"></div>
<span class="t" style="left:1203.3px;top:465.66650000000004px;font-size:12px;line-height:12px;font-weight:400;color:#111;transform:translateX(-50%) scaleX(0.95);transform-origin:50% 50%;">0.00001</span>
<div class="a" style="left:1288px;top:456px;width:146px;height:32px;background:#fff;border:1px solid #767676;border-radius:5px;"></div>
<span class="t" style="left:1361px;top:465.66650000000004px;font-size:12px;line-height:12px;font-weight:400;color:#111;transform:translateX(-50%) scaleX(0.95);transform-origin:50% 50%;">0.00001</span>
<svg class="a" style="left:1490.5px;top:465.36650000000003px;" width="13" height="13" viewBox="0 0 13 13"><rect x="0.5" y="0.5" width="12" height="12" rx="2.5" fill="#fff" stroke="#767676" stroke-width="1"/></svg>
<div class="a" style="left:1567px;top:456px;width:187px;height:33px;background:#fff;border:1px solid #767676;border-radius:6px;"></div>
<svg class="a" style="left:1739px;top:470px;" width="10" height="7" viewBox="0 0 10 7"><path d="M1 1.2 L5 5.2 L9 1.2" fill="none" stroke="#111" stroke-width="1.9"/></svg>
<svg class="a" style="left:1760px;top:458.36650000000003px;" width="22" height="26" viewBox="0 0 22 26"><path d="M6.6 8.6 Q6.7 4.5 10.2 4.4 Q13.6 4.5 13.7 8.2" fill="none" stroke="#111" stroke-width="1.1"/><path d="M8.6 17 V8 Q8.6 6.1 10.1 6.1 Q11.6 6.1 11.6 8 V15 M11.6 11.6 Q11.6 10.6 12.6 10.6 Q13.6 10.6 13.6 11.8 V15 M13.6 12.6 Q13.6 11.6 14.8 11.6 Q16.1 11.6 16.1 12.9 V15.5 M16.1 13.6 Q16.1 12.6 17.9 12.6 Q19.7 12.6 19.7 14.2 V20.5 Q19.7 23.6 16.5 23.6 H12.6 Q11.1 23.6 10.1 22.6 L4.9 17.6 Q4.1 16.6 5.1 15.6 Q6.1 14.9 7.1 15.6 L8.6 17.2" fill="#fff" stroke="#111" stroke-width="1.3" stroke-linejoin="round"/></svg>
<span class="t" style="left:48.5px;top:510.99979999999994px;font-size:12px;line-height:12px;font-weight:400;color:#111;transform:translateX(-50%) scaleX(0.95);transform-origin:50% 50%;">7</span>
<svg class="a" style="left:98px;top:506.89979999999997px;" width="18" height="21" viewBox="0 0 18 21"><rect x="1.05" y="1.35" width="12.1" height="15.3" fill="none" stroke="#111" stroke-width="1.3"/><rect x="5.05" y="5.45" width="11.9" height="14.5" fill="#fff" stroke="#111" stroke-width="1.3"/></svg>
<svg class="a" style="left:132px;top:506.89979999999997px;" width="18" height="21" viewBox="0 0 18 21"><path d="M6.2 1.2 H11.9" stroke="#a8a8a8" stroke-width="1.1"/><rect x="0.8" y="3.6" width="16.4" height="2.9" rx="0.6" fill="none" stroke="#a8a8a8" stroke-width="1.05"/><path d="M2.2 8.5 V20.1 H16.3 V8.5 M5.3 8.5 V16.9 M9.2 8.5 V16.9 M13 8.5 V16.9" fill="none" stroke="#a8a8a8" stroke-width="1.3"/></svg>
<svg class="a" style="left:162.5px;top:505.59979999999996px;" width="25" height="24" viewBox="0 0 25 24"><path d="M12.1 0.5 V15.5 M4.8 9 L12.1 16 L19.5 9" fill="none" stroke="#111" stroke-width="2"/><path d="M1.5 15.3 V22.4 H22.6 V15.3" fill="none" stroke="#111" stroke-width="2"/></svg>
<span class="t" style="left:245.5px;top:510.99979999999994px;font-size:12px;line-height:12px;font-weight:400;color:#111;transform:translateX(-50%) scaleX(0.9);transform-origin:50% 50%;">LineNode</span>
<div class="a" style="left:283px;top:502px;width:147px;height:32px;background:#fff;border:1px solid #767676;border-radius:5px;"></div>
<span class="t" style="left:356.5px;top:510.99979999999994px;font-size:12px;line-height:12px;font-weight:400;color:#111;transform:translateX(-50%) scaleX(0.885);transform-origin:50% 50%;">_empty node (2)</span>
<div class="a" style="left:445px;top:501px;width:187px;height:33px;background:#fff;border:1px solid #767676;border-radius:6px;"></div>
<svg class="a" style="left:617px;top:515px;" width="10" height="7" viewBox="0 0 10 7"><path d="M1 1.2 L5 5.2 L9 1.2" fill="none" stroke="#111" stroke-width="1.9"/></svg>
<div class="a" style="left:681px;top:503.89979999999997px;width:77px;height:28px;background:#f4f4f4;border:1.5px solid #7c7c7c;border-radius:7px;"></div>
<svg class="a" style="left:744px;top:514.1998px;" width="8" height="5" viewBox="0 0 8 5"><path d="M0 0 H8 L4 4.5 Z" fill="#777"/></svg>
<span class="t" style="left:820.8px;top:510.99979999999994px;font-size:12px;line-height:12px;font-weight:400;color:#e5443a;transform:translateX(-50%) scaleX(0.95);transform-origin:50% 50%;">2</span>
<span class="t" style="left:878.5px;top:510.99979999999994px;font-size:12px;line-height:12px;font-weight:400;color:#e5443a;transform:translateX(-50%) scaleX(0.95);transform-origin:50% 50%;">0</span>
<span class="t" style="left:946.8px;top:510.99979999999994px;font-size:12px;line-height:12px;font-weight:400;color:#e5443a;transform:translateX(-50%) scaleX(0.95);transform-origin:50% 50%;">587</span>
<svg class="a" style="left:1010.5px;top:510.6998px;" width="13" height="13" viewBox="0 0 13 13"><rect x="0.5" y="0.5" width="12" height="12" rx="2.5" fill="#fff" stroke="#767676" stroke-width="1"/></svg>
<svg class="a" style="left:1082.0px;top:510.6998px;" width="13" height="13" viewBox="0 0 13 13"><rect x="0" y="0" width="13" height="13" rx="2.5" fill="#ececec"/><path d="M2.4 7.2 L5.2 9.8 L10.6 3.2" fill="none" stroke="#fafafa" stroke-width="1.9"/></svg>
<div class="a" style="left:1130px;top:502px;width:147px;height:32px;background:#fff;border:1px solid #767676;border-radius:5px;"></div>
<span class="t" style="left:1203.3px;top:510.99979999999994px;font-size:12px;line-height:12px;font-weight:400;color:#111;transform:translateX(-50%) scaleX(0.95);transform-origin:50% 50%;">0.00001</span>
<div class="a" style="left:1288px;top:502px;width:146px;height:32px;background:#fff;border:1px solid #767676;border-radius:5px;"></div>
<span class="t" style="left:1361px;top:510.99979999999994px;font-size:12px;line-height:12px;font-weight:400;color:#111;transform:translateX(-50%) scaleX(0.95);transform-origin:50% 50%;">0.00001</span>
<svg class="a" style="left:1490.5px;top:510.6998px;" width="13" height="13" viewBox="0 0 13 13"><rect x="0.5" y="0.5" width="12" height="12" rx="2.5" fill="#fff" stroke="#767676" stroke-width="1"/></svg>
<div class="a" style="left:1567px;top:501px;width:187px;height:33px;background:#fff;border:1px solid #767676;border-radius:6px;"></div>
<svg class="a" style="left:1739px;top:515px;" width="10" height="7" viewBox="0 0 10 7"><path d="M1 1.2 L5 5.2 L9 1.2" fill="none" stroke="#111" stroke-width="1.9"/></svg>
<svg class="a" style="left:1760px;top:503.6998px;" width="22" height="26" viewBox="0 0 22 26"><path d="M6.6 8.6 Q6.7 4.5 10.2 4.4 Q13.6 4.5 13.7 8.2" fill="none" stroke="#111" stroke-width="1.1"/><path d="M8.6 17 V8 Q8.6 6.1 10.1 6.1 Q11.6 6.1 11.6 8 V15 M11.6 11.6 Q11.6 10.6 12.6 10.6 Q13.6 10.6 13.6 11.8 V15 M13.6 12.6 Q13.6 11.6 14.8 11.6 Q16.1 11.6 16.1 12.9 V15.5 M16.1 13.6 Q16.1 12.6 17.9 12.6 Q19.7 12.6 19.7 14.2 V20.5 Q19.7 23.6 16.5 23.6 H12.6 Q11.1 23.6 10.1 22.6 L4.9 17.6 Q4.1 16.6 5.1 15.6 Q6.1 14.9 7.1 15.6 L8.6 17.2" fill="#fff" stroke="#111" stroke-width="1.3" stroke-linejoin="round"/></svg>
<span class="t" style="left:48.5px;top:556.3331000000001px;font-size:12px;line-height:12px;font-weight:400;color:#111;transform:translateX(-50%) scaleX(0.95);transform-origin:50% 50%;">8</span>
<svg class="a" style="left:98px;top:552.2331000000001px;" width="18" height="21" viewBox="0 0 18 21"><rect x="1.05" y="1.35" width="12.1" height="15.3" fill="none" stroke="#111" stroke-width="1.3"/><rect x="5.05" y="5.45" width="11.9" height="14.5" fill="#fff" stroke="#111" stroke-width="1.3"/></svg>
<svg class="a" style="left:132px;top:552.2331000000001px;" width="18" height="21" viewBox="0 0 18 21"><path d="M6.2 1.2 H11.9" stroke="#a8a8a8" stroke-width="1.1"/><rect x="0.8" y="3.6" width="16.4" height="2.9" rx="0.6" fill="none" stroke="#a8a8a8" stroke-width="1.05"/><path d="M2.2 8.5 V20.1 H16.3 V8.5 M5.3 8.5 V16.9 M9.2 8.5 V16.9 M13 8.5 V16.9" fill="none" stroke="#a8a8a8" stroke-width="1.3"/></svg>
<svg class="a" style="left:162.5px;top:550.9331000000002px;" width="25" height="24" viewBox="0 0 25 24"><path d="M12.1 0.5 V15.5 M4.8 9 L12.1 16 L19.5 9" fill="none" stroke="#111" stroke-width="2"/><path d="M1.5 15.3 V22.4 H22.6 V15.3" fill="none" stroke="#111" stroke-width="2"/></svg>
<span class="t" style="left:245.5px;top:556.3331000000001px;font-size:12px;line-height:12px;font-weight:400;color:#111;transform:translateX(-50%) scaleX(0.9);transform-origin:50% 50%;">Node</span>
<div class="a" style="left:283px;top:547px;width:147px;height:32px;background:#fff;border:1px solid #767676;border-radius:5px;"></div>
<span class="t" style="left:356.5px;top:556.3331000000001px;font-size:12px;line-height:12px;font-weight:400;color:#111;transform:translateX(-50%) scaleX(0.885);transform-origin:50% 50%;">_SNMP_External_IPs</span>
<div class="a" style="left:445px;top:547px;width:187px;height:33px;background:#fff;border:1px solid #767676;border-radius:6px;"></div>
<svg class="a" style="left:617px;top:561px;" width="10" height="7" viewBox="0 0 10 7"><path d="M1 1.2 L5 5.2 L9 1.2" fill="none" stroke="#111" stroke-width="1.9"/></svg>
<svg class="a" style="left:692px;top:548.0331000000001px" width="30" height="30" viewBox="0 0 30 30">
<circle cx="15" cy="15" r="14.6" fill="#3a9a35"/>
<g fill="#fff"><path d="M15 3.5 L19 8 H16.5 V11 H13.5 V8 H11 Z"/><path d="M15 26.5 L19 22 H16.5 V19 H13.5 V22 H11 Z"/>
<path d="M3.5 15 L8 11 V13.5 H11 V16.5 H8 V19 Z"/><path d="M26.5 15 L22 11 V13.5 H19 V16.5 H22 V19 Z"/></g>
</svg>
<div class="a" style="left:767px;top:553.0331000000001px;width:20px;height:19.6px;background:#fff;border:1px solid #000;border-radius:6px;"></div>
<svg class="a" style="left:772.5px;top:564.5331000000001px;" width="9" height="2" viewBox="0 0 9 2"><path d="M0.3 1 H2.2 M3.5 1 H5.5 M6.8 1 H8.7" stroke="#000" stroke-width="1.2"/></svg>
<span class="t" style="left:820.8px;top:556.3331000000001px;font-size:12px;line-height:12px;font-weight:400;color:#e5443a;transform:translateX(-50%) scaleX(0.95);transform-origin:50% 50%;">5</span>
<span class="t" style="left:878.5px;top:556.3331000000001px;font-size:12px;line-height:12px;font-weight:400;color:#e5443a;transform:translateX(-50%) scaleX(0.95);transform-origin:50% 50%;">0</span>
<span class="t" style="left:946.8px;top:556.3331000000001px;font-size:12px;line-height:12px;font-weight:400;color:#e5443a;transform:translateX(-50%) scaleX(0.95);transform-origin:50% 50%;">12</span>
<svg class="a" style="left:1010.5px;top:556.0331000000001px;" width="13" height="13" viewBox="0 0 13 13"><rect x="0.5" y="0.5" width="12" height="12" rx="2.5" fill="#fff" stroke="#767676" stroke-width="1"/></svg>
<svg class="a" style="left:1082.0px;top:556.0331000000001px;" width="13" height="13" viewBox="0 0 13 13"><rect x="0" y="0" width="13" height="13" rx="2.5" fill="#ececec"/><path d="M2.4 7.2 L5.2 9.8 L10.6 3.2" fill="none" stroke="#fafafa" stroke-width="1.9"/></svg>
<div class="a" style="left:1130px;top:547px;width:147px;height:32px;background:#fff;border:1px solid #767676;border-radius:5px;"></div>
<span class="t" style="left:1203.3px;top:556.3331000000001px;font-size:12px;line-height:12px;font-weight:400;color:#111;transform:translateX(-50%) scaleX(0.95);transform-origin:50% 50%;">0.5</span>
<div class="a" style="left:1288px;top:547px;width:146px;height:32px;background:#fff;border:1px solid #767676;border-radius:5px;"></div>
<span class="t" style="left:1361px;top:556.3331000000001px;font-size:12px;line-height:12px;font-weight:400;color:#111;transform:translateX(-50%) scaleX(0.95);transform-origin:50% 50%;">0.5</span>
<svg class="a" style="left:1490.5px;top:556.0331000000001px;" width="13" height="13" viewBox="0 0 13 13"><rect x="0.5" y="0.5" width="12" height="12" rx="2.5" fill="#fff" stroke="#767676" stroke-width="1"/></svg>
<div class="a" style="left:1567px;top:547px;width:187px;height:33px;background:#fff;border:1px solid #767676;border-radius:6px;"></div>
<svg class="a" style="left:1739px;top:561px;" width="10" height="7" viewBox="0 0 10 7"><path d="M1 1.2 L5 5.2 L9 1.2" fill="none" stroke="#111" stroke-width="1.9"/></svg>
<svg class="a" style="left:1760px;top:549.0331000000001px;" width="22" height="26" viewBox="0 0 22 26"><path d="M6.6 8.6 Q6.7 4.5 10.2 4.4 Q13.6 4.5 13.7 8.2" fill="none" stroke="#111" stroke-width="1.1"/><path d="M8.6 17 V8 Q8.6 6.1 10.1 6.1 Q11.6 6.1 11.6 8 V15 M11.6 11.6 Q11.6 10.6 12.6 10.6 Q13.6 10.6 13.6 11.8 V15 M13.6 12.6 Q13.6 11.6 14.8 11.6 Q16.1 11.6 16.1 12.9 V15.5 M16.1 13.6 Q16.1 12.6 17.9 12.6 Q19.7 12.6 19.7 14.2 V20.5 Q19.7 23.6 16.5 23.6 H12.6 Q11.1 23.6 10.1 22.6 L4.9 17.6 Q4.1 16.6 5.1 15.6 Q6.1 14.9 7.1 15.6 L8.6 17.2" fill="#fff" stroke="#111" stroke-width="1.3" stroke-linejoin="round"/></svg>
<span class="t" style="left:48.5px;top:601.6664000000001px;font-size:12px;line-height:12px;font-weight:400;color:#111;transform:translateX(-50%) scaleX(0.95);transform-origin:50% 50%;">9</span>
<svg class="a" style="left:98px;top:597.5664000000002px;" width="18" height="21" viewBox="0 0 18 21"><rect x="1.05" y="1.35" width="12.1" height="15.3" fill="none" stroke="#111" stroke-width="1.3"/><rect x="5.05" y="5.45" width="11.9" height="14.5" fill="#fff" stroke="#111" stroke-width="1.3"/></svg>
<svg class="a" style="left:132px;top:597.5664000000002px;" width="18" height="21" viewBox="0 0 18 21"><path d="M6.2 1.2 H11.9" stroke="#111" stroke-width="1.1"/><rect x="0.8" y="3.6" width="16.4" height="2.9" rx="0.6" fill="none" stroke="#111" stroke-width="1.05"/><path d="M2.2 8.5 V20.1 H16.3 V8.5 M5.3 8.5 V16.9 M9.2 8.5 V16.9 M13 8.5 V16.9" fill="none" stroke="#111" stroke-width="1.3"/></svg>
<svg class="a" style="left:162.5px;top:596.2664000000002px;" width="25" height="24" viewBox="0 0 25 24"><path d="M12.1 0.5 V15.5 M4.8 9 L12.1 16 L19.5 9" fill="none" stroke="#111" stroke-width="2"/><path d="M1.5 15.3 V22.4 H22.6 V15.3" fill="none" stroke="#111" stroke-width="2"/></svg>
<span class="t" style="left:245.5px;top:601.6664000000001px;font-size:12px;line-height:12px;font-weight:400;color:#111;transform:translateX(-50%) scaleX(0.9);transform-origin:50% 50%;">Node</span>
<div class="a" style="left:283px;top:592px;width:147px;height:32px;background:#fff;border:1px solid #767676;border-radius:5px;"></div>
<span class="t" style="left:356.5px;top:601.6664000000001px;font-size:12px;line-height:12px;font-weight:400;color:#111;transform:translateX(-50%) scaleX(0.885);transform-origin:50% 50%;">_SNMP_External_MACs</span>
<div class="a" style="left:445px;top:592px;width:187px;height:33px;background:#fff;border:1px solid #767676;border-radius:6px;"></div>
<svg class="a" style="left:617px;top:606px;" width="10" height="7" viewBox="0 0 10 7"><path d="M1 1.2 L5 5.2 L9 1.2" fill="none" stroke="#111" stroke-width="1.9"/></svg>
<svg class="a" style="left:692px;top:593.3664000000001px" width="30" height="30" viewBox="0 0 30 30">
<path d="M15 0 V30 M0 15 H30" stroke="#1e9ce6" stroke-width="1"/>
<rect x="2.3" y="2.6" width="25.5" height="25" rx="2" fill="#1e9ce6"/>
<g fill="#fff"><path d="M15 4 L19.5 8.5 H16.5 V21.5 H19.5 L15 26 L10.5 21.5 H13.5 V8.5 H10.5 Z"/>
<path d="M4.5 15 L9 11 V13.8 H12 V16.2 H9 V19 Z"/><path d="M25.5 15 L21 11 V13.8 H18 V16.2 H21 V19 Z"/></g>
</svg>
<div class="a" style="left:767px;top:598.3664000000001px;width:20px;height:19.6px;background:#fff;border:1px solid #000;border-radius:6px;"></div>
<svg class="a" style="left:772.5px;top:609.8664000000001px;" width="9" height="2" viewBox="0 0 9 2"><path d="M0.3 1 H2.2 M3.5 1 H5.5 M6.8 1 H8.7" stroke="#000" stroke-width="1.2"/></svg>
<span class="t" style="left:820.8px;top:601.6664000000001px;font-size:12px;line-height:12px;font-weight:400;color:#e5443a;transform:translateX(-50%) scaleX(0.95);transform-origin:50% 50%;">5</span>
<span class="t" style="left:878.5px;top:601.6664000000001px;font-size:12px;line-height:12px;font-weight:400;color:#e5443a;transform:translateX(-50%) scaleX(0.95);transform-origin:50% 50%;">0</span>
<span class="t" style="left:946.8px;top:601.6664000000001px;font-size:12px;line-height:12px;font-weight:400;color:#e5443a;transform:translateX(-50%) scaleX(0.95);transform-origin:50% 50%;">0</span>
<svg class="a" style="left:1010.5px;top:601.3664000000001px;" width="13" height="13" viewBox="0 0 13 13"><rect x="0.5" y="0.5" width="12" height="12" rx="2.5" fill="#fff" stroke="#767676" stroke-width="1"/></svg>
<svg class="a" style="left:1082.0px;top:601.3664000000001px;" width="13" height="13" viewBox="0 0 13 13"><rect x="0.5" y="0.5" width="12" height="12" rx="2.5" fill="#fff" stroke="#767676" stroke-width="1"/></svg>
<div class="a" style="left:1130px;top:592px;width:147px;height:32px;background:#fff;border:1px solid #767676;border-radius:5px;"></div>
<span class="t" style="left:1203.3px;top:601.6664000000001px;font-size:12px;line-height:12px;font-weight:400;color:#111;transform:translateX(-50%) scaleX(0.95);transform-origin:50% 50%;">0.5</span>
<div class="a" style="left:1288px;top:592px;width:146px;height:32px;background:#fff;border:1px solid #767676;border-radius:5px;"></div>
<span class="t" style="left:1361px;top:601.6664000000001px;font-size:12px;line-height:12px;font-weight:400;color:#111;transform:translateX(-50%) scaleX(0.95);transform-origin:50% 50%;">0.5</span>
<svg class="a" style="left:1490.5px;top:601.3664000000001px;" width="13" height="13" viewBox="0 0 13 13"><rect x="0.5" y="0.5" width="12" height="12" rx="2.5" fill="#fff" stroke="#767676" stroke-width="1"/></svg>
<div class="a" style="left:1567px;top:592px;width:187px;height:33px;background:#fff;border:1px solid #767676;border-radius:6px;"></div>
<svg class="a" style="left:1739px;top:606px;" width="10" height="7" viewBox="0 0 10 7"><path d="M1 1.2 L5 5.2 L9 1.2" fill="none" stroke="#111" stroke-width="1.9"/></svg>
<svg class="a" style="left:1760px;top:594.3664000000001px;" width="22" height="26" viewBox="0 0 22 26"><path d="M6.6 8.6 Q6.7 4.5 10.2 4.4 Q13.6 4.5 13.7 8.2" fill="none" stroke="#111" stroke-width="1.1"/><path d="M8.6 17 V8 Q8.6 6.1 10.1 6.1 Q11.6 6.1 11.6 8 V15 M11.6 11.6 Q11.6 10.6 12.6 10.6 Q13.6 10.6 13.6 11.8 V15 M13.6 12.6 Q13.6 11.6 14.8 11.6 Q16.1 11.6 16.1 12.9 V15.5 M16.1 13.6 Q16.1 12.6 17.9 12.6 Q19.7 12.6 19.7 14.2 V20.5 Q19.7 23.6 16.5 23.6 H12.6 Q11.1 23.6 10.1 22.6 L4.9 17.6 Q4.1 16.6 5.1 15.6 Q6.1 14.9 7.1 15.6 L8.6 17.2" fill="#fff" stroke="#111" stroke-width="1.3" stroke-linejoin="round"/></svg>
<span class="t" style="left:48.5px;top:646.9997000000001px;font-size:12px;line-height:12px;font-weight:400;color:#111;transform:translateX(-50%) scaleX(0.95);transform-origin:50% 50%;">10</span>
<svg class="a" style="left:115px;top:642.8997000000002px;" width="18" height="21" viewBox="0 0 18 21"><rect x="1.05" y="1.35" width="12.1" height="15.3" fill="none" stroke="#b4b4b4" stroke-width="1.3"/><rect x="5.05" y="5.45" width="11.9" height="14.5" fill="#fff" stroke="#b4b4b4" stroke-width="1.3"/></svg>
<svg class="a" style="left:149px;top:642.8997000000002px;" width="18" height="21" viewBox="0 0 18 21"><path d="M6.2 1.2 H11.9" stroke="#b4b4b4" stroke-width="1.1"/><rect x="0.8" y="3.6" width="16.4" height="2.9" rx="0.6" fill="none" stroke="#b4b4b4" stroke-width="1.05"/><path d="M2.2 8.5 V20.1 H16.3 V8.5 M5.3 8.5 V16.9 M9.2 8.5 V16.9 M13 8.5 V16.9" fill="none" stroke="#b4b4b4" stroke-width="1.3"/></svg>
<span class="t" style="left:245.5px;top:646.9997000000001px;font-size:12px;line-height:12px;font-weight:400;color:#111;transform:translateX(-50%) scaleX(0.9);transform-origin:50% 50%;">Slot</span>
<div class="a" style="left:283px;top:638px;width:147px;height:32px;background:#fff;border:1px solid #cfcfcf;border-radius:5px;"></div>
<span class="t" style="left:356.5px;top:646.9997000000001px;font-size:12px;line-height:12px;font-weight:400;color:#9a9a9a;transform:translateX(-50%) scaleX(0.9);transform-origin:50% 50%;">&lt;Empty Slot&gt;</span>
<div class="a" style="left:690px;top:638.1997000000001px;width:33px;height:33px;border:1px solid #c9daf6;"></div>
<div class="a" style="left:767px;top:643.6997000000001px;width:20px;height:19.6px;background:#fff;border:1px solid #9a9a9a;border-radius:6px;"></div>
<svg class="a" style="left:772.5px;top:655.1997000000001px;" width="9" height="2" viewBox="0 0 9 2"><path d="M0.3 1 H2.2 M3.5 1 H5.5 M6.8 1 H8.7" stroke="#9a9a9a" stroke-width="1.2"/></svg>
<span class="t" style="left:820.8px;top:646.9997000000001px;font-size:12px;line-height:12px;font-weight:400;color:#e5443a;transform:translateX(-50%) scaleX(0.95);transform-origin:50% 50%;">4</span>
<span class="t" style="left:878.5px;top:646.9997000000001px;font-size:12px;line-height:12px;font-weight:400;color:#e5443a;transform:translateX(-50%) scaleX(0.95);transform-origin:50% 50%;">0</span>
<span class="t" style="left:946.8px;top:646.9997000000001px;font-size:12px;line-height:12px;font-weight:400;color:#e5443a;transform:translateX(-50%) scaleX(0.95);transform-origin:50% 50%;">14356</span>
<div class="a" style="left:1130px;top:638px;width:147px;height:32px;background:#fff;border:1px solid #767676;border-radius:5px;"></div>
<span class="t" style="left:1203.3px;top:646.9997000000001px;font-size:12px;line-height:12px;font-weight:400;color:#111;transform:translateX(-50%) scaleX(0.95);transform-origin:50% 50%;">0.7</span>
<div class="a" style="left:1288px;top:638px;width:146px;height:32px;background:#fff;border:1px solid #767676;border-radius:5px;"></div>
<span class="t" style="left:1361px;top:646.9997000000001px;font-size:12px;line-height:12px;font-weight:400;color:#111;transform:translateX(-50%) scaleX(0.95);transform-origin:50% 50%;">0.3</span>
<svg class="a" style="left:1490.5px;top:646.6997000000001px;" width="13" height="13" viewBox="0 0 13 13"><rect x="0.5" y="0.5" width="12" height="12" rx="2.5" fill="#fff" stroke="#767676" stroke-width="1"/></svg>
<span class="t" style="left:48.5px;top:692.3330000000001px;font-size:12px;line-height:12px;font-weight:400;color:#111;transform:translateX(-50%) scaleX(0.95);transform-origin:50% 50%;">11</span>
<svg class="a" style="left:82px;top:688.2330000000002px;" width="18" height="21" viewBox="0 0 18 21"><rect x="1.05" y="1.35" width="12.1" height="15.3" fill="none" stroke="#111" stroke-width="1.3"/><rect x="5.05" y="5.45" width="11.9" height="14.5" fill="#fff" stroke="#111" stroke-width="1.3"/></svg>
<svg class="a" style="left:115px;top:688.2330000000002px;" width="18" height="21" viewBox="0 0 18 21"><path d="M6.2 1.2 H11.9" stroke="#111" stroke-width="1.1"/><rect x="0.8" y="3.6" width="16.4" height="2.9" rx="0.6" fill="none" stroke="#111" stroke-width="1.05"/><path d="M2.2 8.5 V20.1 H16.3 V8.5 M5.3 8.5 V16.9 M9.2 8.5 V16.9 M13 8.5 V16.9" fill="none" stroke="#111" stroke-width="1.3"/></svg>
<svg class="a" style="left:147.8px;top:688.2330000000002px;" width="21" height="22" viewBox="0 0 21 22"><path d="M1.2 20.6 L19.8 1.8 V20.6 Z" fill="none" stroke="#111" stroke-width="1.5" stroke-linejoin="miter"/><path d="M9.6 16.6 L15.6 10.6 V16.6 Z" fill="none" stroke="#111" stroke-width="1.4"/><path d="M18.2 5 H19.5 M18.2 8 H19.5 M18.2 11 H19.5 M18.2 14 H19.5 M18.2 17 H19.5 M6 19.2 V20.5 M9 19.2 V20.5 M12 19.2 V20.5 M15 19.2 V20.5" stroke="#111" stroke-width="0.9"/></svg>
<svg class="a" style="left:179.6px;top:686.9330000000002px;" width="25" height="24" viewBox="0 0 25 24"><path d="M12.1 0.5 V15.5 M4.8 9 L12.1 16 L19.5 9" fill="none" stroke="#111" stroke-width="2"/><path d="M1.5 15.3 V22.4 H22.6 V15.3" fill="none" stroke="#111" stroke-width="2"/></svg>
<span class="t" style="left:245.5px;top:692.3330000000001px;font-size:12px;line-height:12px;font-weight:400;color:#111;transform:translateX(-50%) scaleX(0.9);transform-origin:50% 50%;">Card</span>
<div class="a" style="left:283px;top:683px;width:147px;height:32px;background:#fff;border:1px solid #767676;border-radius:5px;"></div>
<span class="t" style="left:356.5px;top:692.3330000000001px;font-size:12px;line-height:12px;font-weight:400;color:#111;transform:translateX(-50%) scaleX(0.885);transform-origin:50% 50%;">020-589-Breaker</span>
<svg class="a" style="left:702px;top:683.8330000000001px" width="10" height="32" viewBox="0 0 10 32">
<rect x="0" y="0" width="10" height="32" fill="#222"/>
<rect x="1" y="7" width="8" height="5" fill="#ddd"/><rect x="1" y="17" width="8" height="8" fill="#e6e6e6"/>
<rect x="0" y="3" width="10" height="1.2" fill="#666"/><rect x="0" y="27" width="10" height="1.5" fill="#555"/>
</svg>
<div class="a" style="left:767px;top:689.0330000000001px;width:20px;height:19.6px;background:#fff;border:1px solid #000;border-radius:6px;"></div>
<svg class="a" style="left:772.5px;top:700.5330000000001px;" width="9" height="2" viewBox="0 0 9 2"><path d="M0.3 1 H2.2 M3.5 1 H5.5 M6.8 1 H8.7" stroke="#000" stroke-width="1.2"/></svg>
<span class="t" style="left:820.8px;top:692.3330000000001px;font-size:12px;line-height:12px;font-weight:400;color:#e5443a;transform:translateX(-50%) scaleX(0.95);transform-origin:50% 50%;">7</span>
<span class="t" style="left:878.5px;top:692.3330000000001px;font-size:12px;line-height:12px;font-weight:400;color:#e5443a;transform:translateX(-50%) scaleX(0.95);transform-origin:50% 50%;">0</span>
<span class="t" style="left:946.8px;top:692.3330000000001px;font-size:12px;line-height:12px;font-weight:400;color:#e5443a;transform:translateX(-50%) scaleX(0.95);transform-origin:50% 50%;">0</span>
<svg class="a" style="left:1082.0px;top:692.0330000000001px;" width="13" height="13" viewBox="0 0 13 13"><rect x="0" y="0" width="13" height="13" rx="2.5" fill="#000"/><path d="M2.4 7.2 L5.2 9.8 L10.6 3.2" fill="none" stroke="#fff" stroke-width="1.9"/></svg>
<div class="a" style="left:1567px;top:683px;width:187px;height:33px;background:#fff;border:1px solid #767676;border-radius:6px;"></div>
<svg class="a" style="left:1739px;top:697px;" width="10" height="7" viewBox="0 0 10 7"><path d="M1 1.2 L5 5.2 L9 1.2" fill="none" stroke="#111" stroke-width="1.9"/></svg>
<svg class="a" style="left:1760px;top:685.0330000000001px;" width="22" height="26" viewBox="0 0 22 26"><path d="M6.6 8.6 Q6.7 4.5 10.2 4.4 Q13.6 4.5 13.7 8.2" fill="none" stroke="#111" stroke-width="1.1"/><path d="M8.6 17 V8 Q8.6 6.1 10.1 6.1 Q11.6 6.1 11.6 8 V15 M11.6 11.6 Q11.6 10.6 12.6 10.6 Q13.6 10.6 13.6 11.8 V15 M13.6 12.6 Q13.6 11.6 14.8 11.6 Q16.1 11.6 16.1 12.9 V15.5 M16.1 13.6 Q16.1 12.6 17.9 12.6 Q19.7 12.6 19.7 14.2 V20.5 Q19.7 23.6 16.5 23.6 H12.6 Q11.1 23.6 10.1 22.6 L4.9 17.6 Q4.1 16.6 5.1 15.6 Q6.1 14.9 7.1 15.6 L8.6 17.2" fill="#fff" stroke="#111" stroke-width="1.3" stroke-linejoin="round"/></svg>
<span class="t" style="left:48.5px;top:737.6663000000001px;font-size:12px;line-height:12px;font-weight:400;color:#111;transform:translateX(-50%) scaleX(0.95);transform-origin:50% 50%;">12</span>
<svg class="a" style="left:82px;top:733.5663000000002px;" width="18" height="21" viewBox="0 0 18 21"><rect x="1.05" y="1.35" width="12.1" height="15.3" fill="none" stroke="#111" stroke-width="1.3"/><rect x="5.05" y="5.45" width="11.9" height="14.5" fill="#fff" stroke="#111" stroke-width="1.3"/></svg>
<svg class="a" style="left:115px;top:733.5663000000002px;" width="18" height="21" viewBox="0 0 18 21"><path d="M6.2 1.2 H11.9" stroke="#a8a8a8" stroke-width="1.1"/><rect x="0.8" y="3.6" width="16.4" height="2.9" rx="0.6" fill="none" stroke="#a8a8a8" stroke-width="1.05"/><path d="M2.2 8.5 V20.1 H16.3 V8.5 M5.3 8.5 V16.9 M9.2 8.5 V16.9 M13 8.5 V16.9" fill="none" stroke="#a8a8a8" stroke-width="1.3"/></svg>
<svg class="a" style="left:147.8px;top:733.5663000000002px;" width="21" height="22" viewBox="0 0 21 22"><path d="M1.2 20.6 L19.8 1.8 V20.6 Z" fill="none" stroke="#111" stroke-width="1.5" stroke-linejoin="miter"/><path d="M9.6 16.6 L15.6 10.6 V16.6 Z" fill="none" stroke="#111" stroke-width="1.4"/><path d="M18.2 5 H19.5 M18.2 8 H19.5 M18.2 11 H19.5 M18.2 14 H19.5 M18.2 17 H19.5 M6 19.2 V20.5 M9 19.2 V20.5 M12 19.2 V20.5 M15 19.2 V20.5" stroke="#111" stroke-width="0.9"/></svg>
<svg class="a" style="left:179.6px;top:732.2663000000002px;" width="25" height="24" viewBox="0 0 25 24"><path d="M12.1 0.5 V15.5 M4.8 9 L12.1 16 L19.5 9" fill="none" stroke="#111" stroke-width="2"/><path d="M1.5 15.3 V22.4 H22.6 V15.3" fill="none" stroke="#111" stroke-width="2"/></svg>
<span class="t" style="left:245.5px;top:737.6663000000001px;font-size:12px;line-height:12px;font-weight:400;color:#111;transform:translateX(-50%) scaleX(0.9);transform-origin:50% 50%;">Device</span>
<div class="a" style="left:283px;top:728px;width:147px;height:32px;background:#fff;border:1px solid #767676;border-radius:5px;"></div>
<span class="t" style="left:356.5px;top:737.6663000000001px;font-size:12px;line-height:12px;font-weight:400;color:#111;transform:translateX(-50%) scaleX(0.885);transform-origin:50% 50%;">12 AC Plugs</span>
<div class="a" style="left:445px;top:728px;width:187px;height:33px;background:#fff;border:1px solid #767676;border-radius:6px;"></div>
<svg class="a" style="left:617px;top:742px;" width="10" height="7" viewBox="0 0 10 7"><path d="M1 1.2 L5 5.2 L9 1.2" fill="none" stroke="#111" stroke-width="1.9"/></svg>
<span class="t" style="left:532px;top:737.6663000000001px;font-size:12px;line-height:12px;font-weight:400;color:#111;transform:translateX(-50%) scaleX(0.905);transform-origin:50% 50%;">Core_Devices_Router</span>
<svg class="a" style="left:652px;top:742.1663000000001px" width="110" height="6" viewBox="0 0 110 6">
<rect x="0" y="0" width="110" height="6" fill="#b9b9b9"/><rect x="4.0" y="1.2" width="5.5" height="3.6" fill="#e2e2e2" stroke="#aaa" stroke-width="0.5"/><rect x="12.6" y="1.2" width="5.5" height="3.6" fill="#e2e2e2" stroke="#aaa" stroke-width="0.5"/><rect x="21.2" y="1.2" width="5.5" height="3.6" fill="#e2e2e2" stroke="#aaa" stroke-width="0.5"/><rect x="29.8" y="1.2" width="5.5" height="3.6" fill="#e2e2e2" stroke="#aaa" stroke-width="0.5"/><rect x="38.4" y="1.2" width="5.5" height="3.6" fill="#e2e2e2" stroke="#aaa" stroke-width="0.5"/><rect x="47.0" y="1.2" width="5.5" height="3.6" fill="#e2e2e2" stroke="#aaa" stroke-width="0.5"/><rect x="55.6" y="1.2" width="5.5" height="3.6" fill="#e2e2e2" stroke="#aaa" stroke-width="0.5"/><rect x="64.2" y="1.2" width="5.5" height="3.6" fill="#e2e2e2" stroke="#aaa" stroke-width="0.5"/><rect x="72.8" y="1.2" width="5.5" height="3.6" fill="#e2e2e2" stroke="#aaa" stroke-width="0.5"/><rect x="81.4" y="1.2" width="5.5" height="3.6" fill="#e2e2e2" stroke="#aaa" stroke-width="0.5"/><rect x="90.0" y="1.2" width="5.5" height="3.6" fill="#e2e2e2" stroke="#aaa" stroke-width="0.5"/><rect x="98.6" y="1.2" width="5.5" height="3.6" fill="#e2e2e2" stroke="#aaa" stroke-width="0.5"/></svg>
<div class="a" style="left:767px;top:734.3663000000001px;width:20px;height:19.6px;background:#fff;border:1px solid #000;border-radius:6px;"></div>
<svg class="a" style="left:772.5px;top:745.8663000000001px;" width="9" height="2" viewBox="0 0 9 2"><path d="M0.3 1 H2.2 M3.5 1 H5.5 M6.8 1 H8.7" stroke="#000" stroke-width="1.2"/></svg>
<span class="t" style="left:820.8px;top:737.6663000000001px;font-size:12px;line-height:12px;font-weight:400;color:#e5443a;transform:translateX(-50%) scaleX(0.95);transform-origin:50% 50%;">17</span>
<span class="t" style="left:878.5px;top:737.6663000000001px;font-size:12px;line-height:12px;font-weight:400;color:#e5443a;transform:translateX(-50%) scaleX(0.95);transform-origin:50% 50%;">0</span>
<span class="t" style="left:946.8px;top:737.6663000000001px;font-size:12px;line-height:12px;font-weight:400;color:#e5443a;transform:translateX(-50%) scaleX(0.95);transform-origin:50% 50%;">1</span>
<svg class="a" style="left:1010.5px;top:737.3663000000001px;" width="13" height="13" viewBox="0 0 13 13"><rect x="0.5" y="0.5" width="12" height="12" rx="2.5" fill="#fff" stroke="#767676" stroke-width="1"/></svg>
<svg class="a" style="left:1082.0px;top:737.3663000000001px;" width="13" height="13" viewBox="0 0 13 13"><rect x="0" y="0" width="13" height="13" rx="2.5" fill="#ececec"/><path d="M2.4 7.2 L5.2 9.8 L10.6 3.2" fill="none" stroke="#fafafa" stroke-width="1.9"/></svg>
<div class="a" style="left:1130px;top:728px;width:147px;height:32px;background:#fff;border:1px solid #767676;border-radius:5px;"></div>
<span class="t" style="left:1203.3px;top:737.6663000000001px;font-size:12px;line-height:12px;font-weight:400;color:#111;transform:translateX(-50%) scaleX(0.95);transform-origin:50% 50%;">0.13</span>
<div class="a" style="left:1288px;top:728px;width:146px;height:32px;background:#fff;border:1px solid #767676;border-radius:5px;"></div>
<span class="t" style="left:1361px;top:737.6663000000001px;font-size:12px;line-height:12px;font-weight:400;color:#111;transform:translateX(-50%) scaleX(0.95);transform-origin:50% 50%;">7.7</span>
<svg class="a" style="left:1490.5px;top:737.3663000000001px;" width="13" height="13" viewBox="0 0 13 13"><rect x="0" y="0" width="13" height="13" rx="2.5" fill="#000"/><path d="M2.4 7.2 L5.2 9.8 L10.6 3.2" fill="none" stroke="#fff" stroke-width="1.9"/></svg>
<div class="a" style="left:1567px;top:728px;width:187px;height:33px;background:#fff;border:1px solid #767676;border-radius:6px;"></div>
<svg class="a" style="left:1739px;top:742px;" width="10" height="7" viewBox="0 0 10 7"><path d="M1 1.2 L5 5.2 L9 1.2" fill="none" stroke="#111" stroke-width="1.9"/></svg>
<svg class="a" style="left:1760px;top:730.3663000000001px;" width="22" height="26" viewBox="0 0 22 26"><path d="M6.6 8.6 Q6.7 4.5 10.2 4.4 Q13.6 4.5 13.7 8.2" fill="none" stroke="#111" stroke-width="1.1"/><path d="M8.6 17 V8 Q8.6 6.1 10.1 6.1 Q11.6 6.1 11.6 8 V15 M11.6 11.6 Q11.6 10.6 12.6 10.6 Q13.6 10.6 13.6 11.8 V15 M13.6 12.6 Q13.6 11.6 14.8 11.6 Q16.1 11.6 16.1 12.9 V15.5 M16.1 13.6 Q16.1 12.6 17.9 12.6 Q19.7 12.6 19.7 14.2 V20.5 Q19.7 23.6 16.5 23.6 H12.6 Q11.1 23.6 10.1 22.6 L4.9 17.6 Q4.1 16.6 5.1 15.6 Q6.1 14.9 7.1 15.6 L8.6 17.2" fill="#fff" stroke="#111" stroke-width="1.3" stroke-linejoin="round"/></svg>
<div class="a" style="left:1802px;top:728px;width:59px;height:32px;background:#fff;border:1px solid #767676;border-right:none;border-radius:5px 0 0 5px;"></div>
<div class="a" style="left:1861px;top:168px;width:10px;height:601px;background:#e3e3e3;"></div>
<div class="a" style="left:1870px;top:168px;width:1px;height:601px;background:#fff;"></div>
<div class="a" style="left:1861px;top:169px;width:9px;height:232px;background:#cdcbcd;border-radius:4.5px 4.5px 4.5px 4.5px;"></div>
<div class="a" style="left:1861px;top:168px;width:9px;height:1px;background:#fff;"></div>
</body></html>
